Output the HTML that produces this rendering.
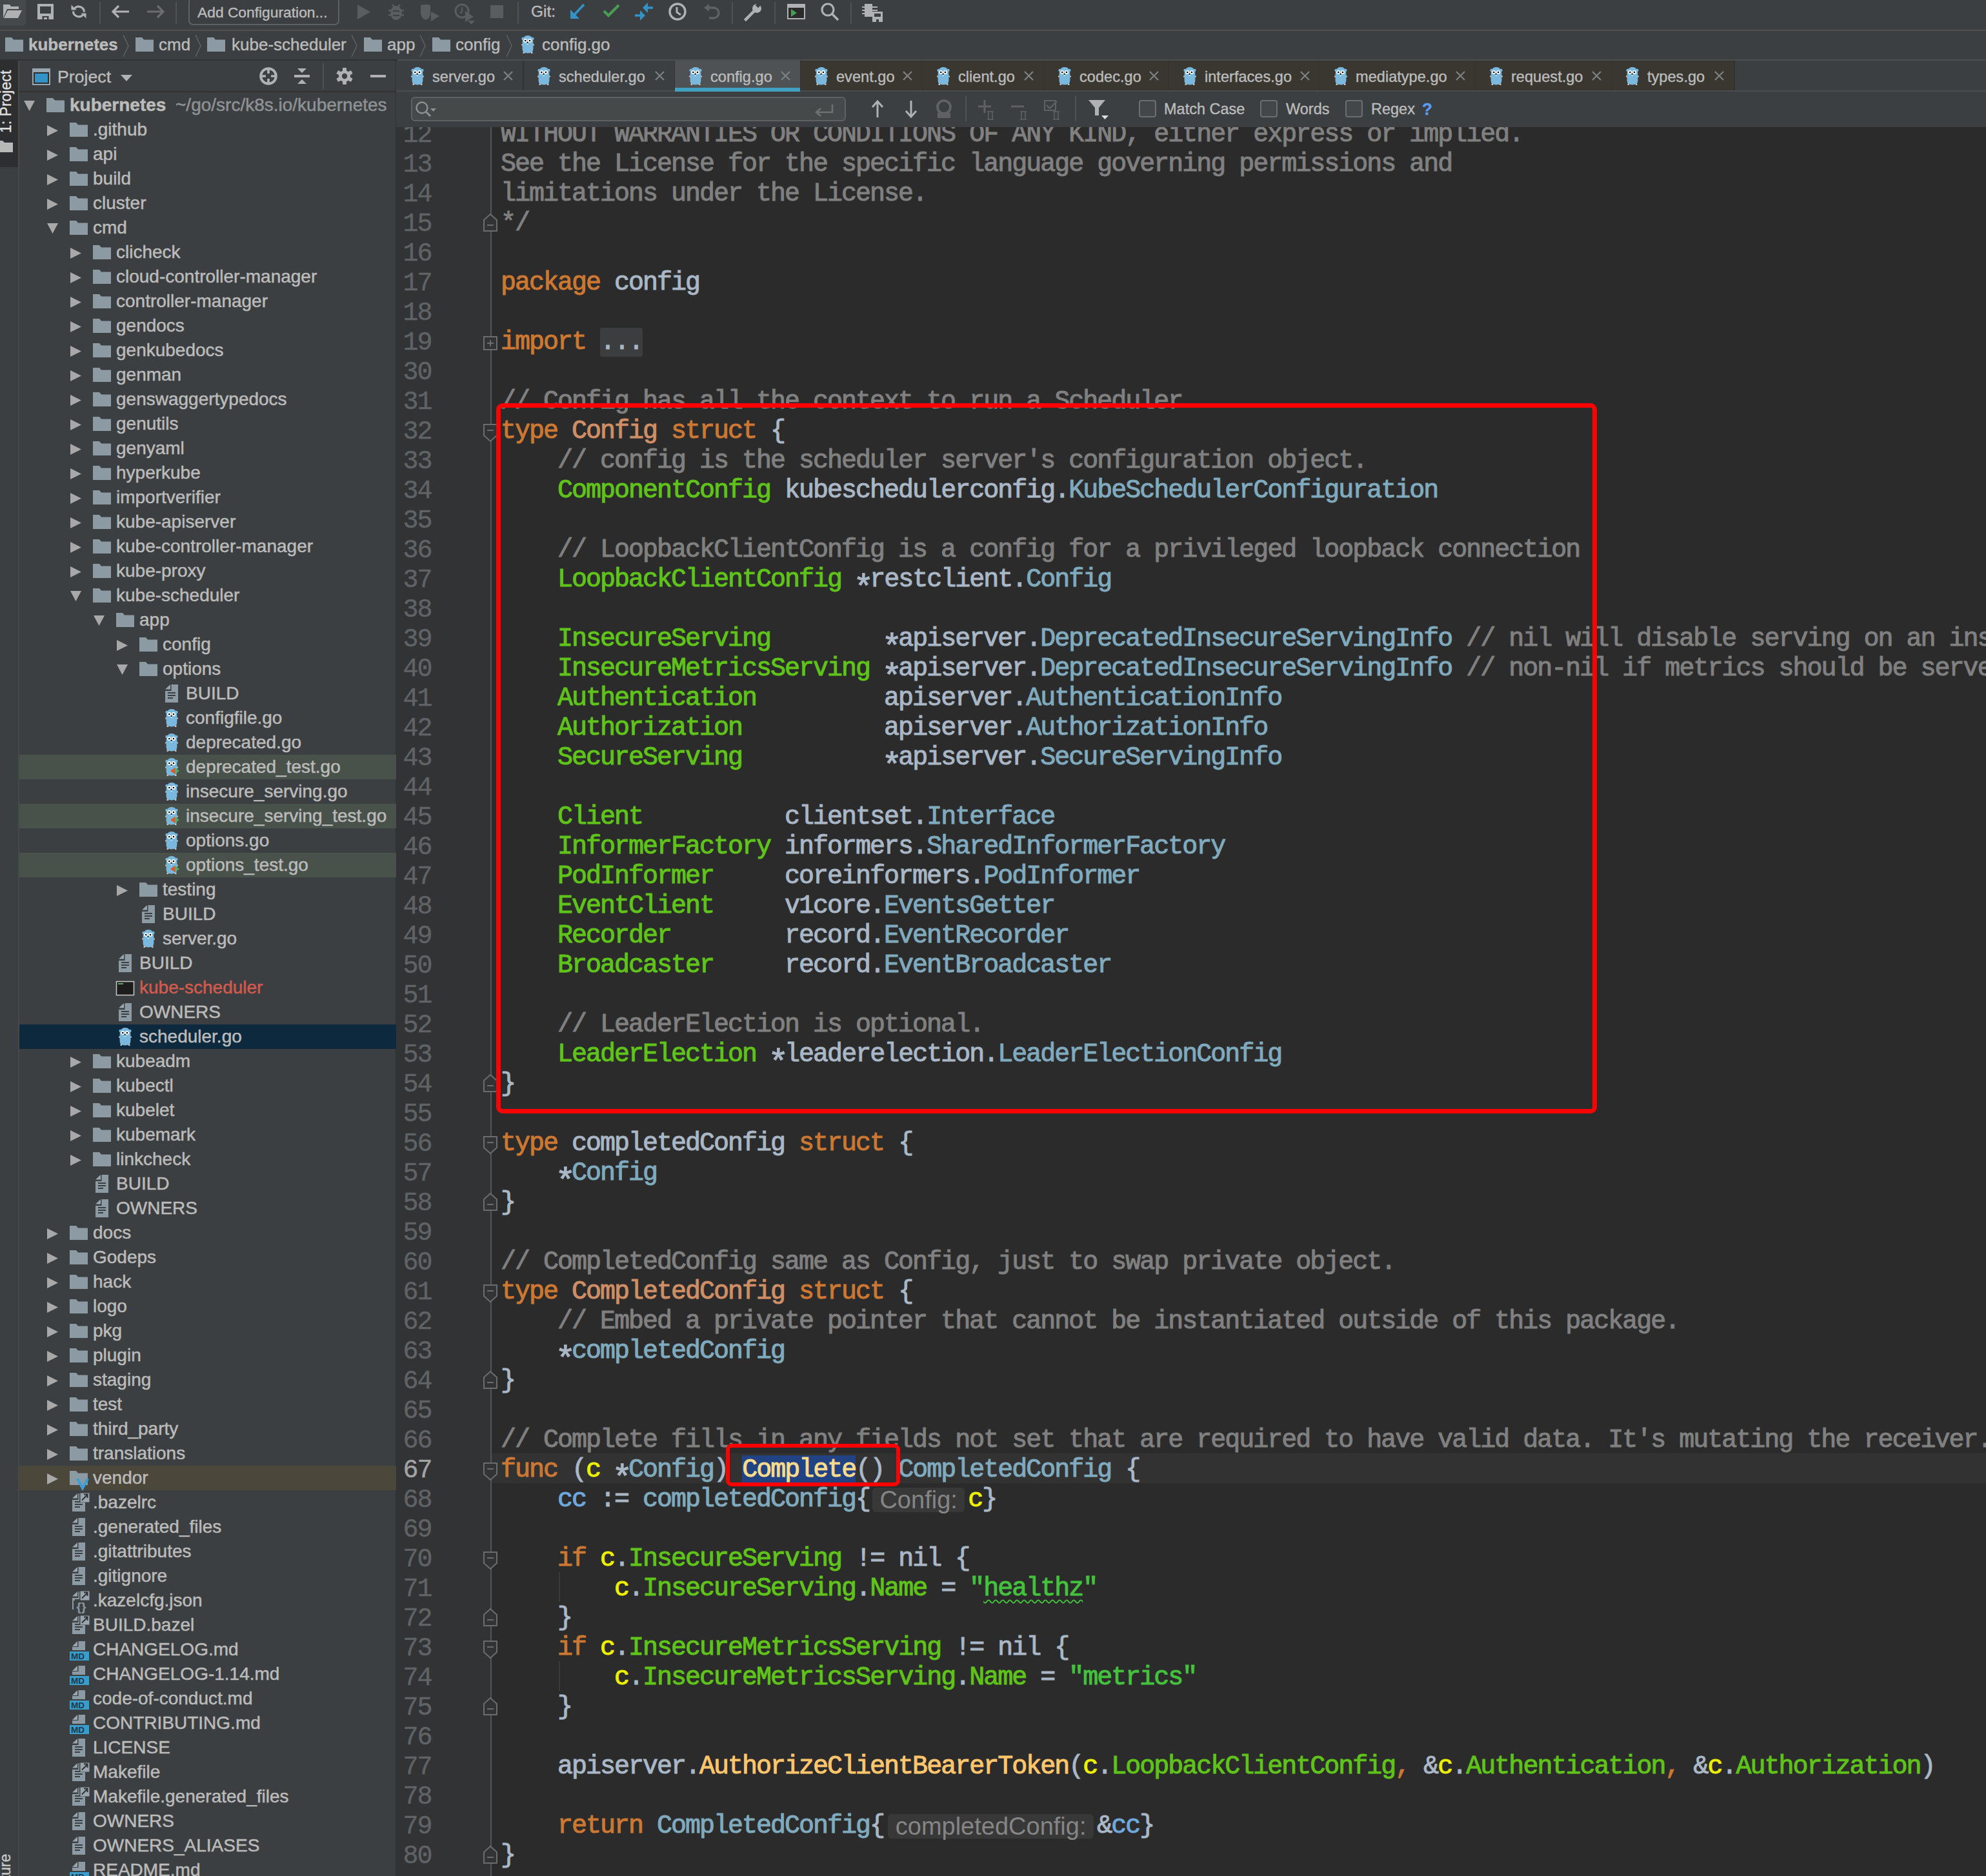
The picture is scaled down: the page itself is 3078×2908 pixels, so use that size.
<!DOCTYPE html>
<html><head><meta charset="utf-8"><title>GoLand</title><style>
*{margin:0;padding:0;box-sizing:border-box}
html,body{width:3078px;height:2908px;overflow:hidden;background:#3c3f41}
body{position:relative;font-family:"Liberation Sans",sans-serif;color:#bbbbbb}
.a{position:absolute}
.ui{position:absolute;-webkit-text-stroke:0.4px currentColor;font-family:"Liberation Sans",sans-serif;white-space:pre;line-height:1}
svg{position:absolute;overflow:visible}
.k{color:#cc7832}.c{color:#808080}.d{color:#a9b7c6}.f{color:#5fc31a}.t{color:#80aabd}
.td{color:#cf8e65}.y{color:#efef00}.fn{color:#ffc66d}.s{color:#44c23e}.v{color:#6fa8dc}
.row{position:absolute;left:776px;-webkit-text-stroke:1.0px currentColor;height:46px;font-family:"Liberation Mono",monospace;white-space:pre;font-size:40px;letter-spacing:-2px;line-height:46px;color:#a9b7c6}
.ln{position:absolute;-webkit-text-stroke:0.4px currentColor;left:598.5px;width:70px;text-align:right;height:46px;font-family:"Liberation Mono",monospace;white-space:pre;font-size:40px;letter-spacing:-2px;line-height:46px;color:#606366}
.tr{position:absolute;-webkit-text-stroke:0.5px currentColor;height:38px;font-size:28px;line-height:38px;white-space:pre;color:#bbbbbb;font-family:"Liberation Sans",sans-serif}
.hint{display:inline-block;background:#383838;color:#858585;font-family:"Liberation Sans",sans-serif;letter-spacing:0;font-size:38px;border-radius:6px;text-align:center;line-height:38px;height:38px;vertical-align:-3px;-webkit-text-stroke:0}
</style></head><body>

<div class="a" style="left:0px;top:0px;width:3078px;height:46px;background:#3c3f41;"></div>
<div class="a" style="left:0px;top:46px;width:3078px;height:2px;background:#505050;"></div>
<div class="a" style="left:0px;top:48px;width:3078px;height:44px;background:#3c3f41;"></div>
<div class="a" style="left:0px;top:92px;width:616px;height:2px;background:#2e3032;"></div>
<div class="a" style="left:616px;top:92px;width:2462px;height:2px;background:#4b4d4f;"></div>
<div class="a" style="left:0px;top:94px;width:28px;height:2814px;background:#3c3f41;"></div>
<div class="a" style="left:0px;top:94px;width:28px;height:165px;background:#2c2e30;"></div>
<div class="a" style="left:28px;top:94px;width:2px;height:2814px;background:#46484a;"></div>
<div class="a" style="left:30px;top:94px;width:584px;height:2814px;background:#3c3f41;"></div>
<div class="a" style="left:30px;top:141px;width:584px;height:2px;background:#323232;"></div>
<div class="a" style="left:613px;top:94px;width:2px;height:2814px;background:#2f3133;"></div>
<div class="a" style="left:614px;top:94px;width:2464px;height:47px;background:#3c3f41;"></div>
<div class="a" style="left:614px;top:140px;width:2464px;height:1px;background:#323232;"></div>
<div class="a" style="left:614px;top:141px;width:2464px;height:55px;background:#3c3f41;"></div>
<div class="a" style="left:614px;top:195px;width:2464px;height:1px;background:#323232;"></div>
<div class="a" style="left:614px;top:196px;width:146px;height:2712px;background:#313335;"></div>
<div class="a" style="left:760px;top:196px;width:2px;height:2712px;background:#555555;"></div>
<div class="a" style="left:762px;top:196px;width:2316px;height:2712px;background:#2b2b2b;"></div>
<div class="ln" style="top:187.35px;color:#606366">12</div>
<div class="row" style="top:186.35px"><span class="c">WITHOUT WARRANTIES OR CONDITIONS OF ANY KIND, either express or implied.</span></div>
<div class="ln" style="top:233.35px;color:#606366">13</div>
<div class="row" style="top:232.35px"><span class="c">See the License for the specific language governing permissions and</span></div>
<div class="ln" style="top:279.35px;color:#606366">14</div>
<div class="row" style="top:278.35px"><span class="c">limitations under the License.</span></div>
<div class="ln" style="top:325.35px;color:#606366">15</div>
<div class="row" style="top:324.35px"><span class="c">*/</span></div>
<svg style="left:749px;top:331px" width="22" height="28" viewBox="0 0 22 28"><path d="M1 27 H21 V10 L11 1 L1 10 Z" fill="#313335" stroke="#6a6d70" stroke-width="2"/><path d="M6 18 H16" stroke="#6a6d70" stroke-width="2"/></svg>
<div class="ln" style="top:371.35px;color:#606366">16</div>
<div class="ln" style="top:417.35px;color:#606366">17</div>
<div class="row" style="top:416.35px"><span class="k">package</span><span class="d"> config</span></div>
<div class="ln" style="top:463.35px;color:#606366">18</div>
<div class="ln" style="top:509.35px;color:#606366">19</div>
<div class="row" style="top:508.35px"><span class="k">import</span><span class="d"> </span><span style="background:#3b3d3e;color:#a9b7c6;border-radius:3px">...</span></div>
<svg style="left:749px;top:521px" width="22" height="22" viewBox="0 0 22 22"><rect x="1" y="1" width="20" height="20" fill="#313335" stroke="#6a6d70" stroke-width="2"/><path d="M6 11 H16 M11 6 V16" stroke="#6a6d70" stroke-width="2"/></svg>
<div class="ln" style="top:555.35px;color:#606366">30</div>
<div class="ln" style="top:601.35px;color:#606366">31</div>
<div class="row" style="top:600.35px"><span class="c">// Config has all the context to run a Scheduler</span></div>
<div class="ln" style="top:647.35px;color:#606366">32</div>
<div class="row" style="top:646.35px"><span class="k">type </span><span class="td">Config</span><span class="k"> struct</span><span class="d"> {</span></div>
<svg style="left:749px;top:657px" width="22" height="28" viewBox="0 0 22 28"><path d="M1 1 H21 V18 L11 27 L1 18 Z" fill="#313335" stroke="#6a6d70" stroke-width="2"/><path d="M6 10 H16" stroke="#6a6d70" stroke-width="2"/></svg>
<div class="ln" style="top:693.35px;color:#606366">33</div>
<div class="row" style="top:692.35px"><span class="d">    </span><span class="c">// config is the scheduler server&#x27;s configuration object.</span></div>
<div class="ln" style="top:739.35px;color:#606366">34</div>
<div class="row" style="top:738.35px"><span class="d">    </span><span class="f">ComponentConfig</span><span class="d"> kubeschedulerconfig.</span><span class="t">KubeSchedulerConfiguration</span></div>
<div class="ln" style="top:785.35px;color:#606366">35</div>
<div class="ln" style="top:831.35px;color:#606366">36</div>
<div class="row" style="top:830.35px"><span class="d">    </span><span class="c">// LoopbackClientConfig is a config for a privileged loopback connection</span></div>
<div class="ln" style="top:877.35px;color:#606366">37</div>
<div class="row" style="top:876.35px"><span class="d">    </span><span class="f">LoopbackClientConfig</span><span class="d"> <span style="display:inline-block;transform:translateY(15px) scale(1.3)">*</span>restclient.</span><span class="t">Config</span></div>
<div class="ln" style="top:923.35px;color:#606366">38</div>
<div class="ln" style="top:969.35px;color:#606366">39</div>
<div class="row" style="top:968.35px"><span class="d">    </span><span class="f">InsecureServing</span><span class="d">        <span style="display:inline-block;transform:translateY(15px) scale(1.3)">*</span>apiserver.</span><span class="t">DeprecatedInsecureServingInfo</span><span class="c"> // nil will disable serving on an insecure port</span></div>
<div class="ln" style="top:1015.35px;color:#606366">40</div>
<div class="row" style="top:1014.35px"><span class="d">    </span><span class="f">InsecureMetricsServing</span><span class="d"> <span style="display:inline-block;transform:translateY(15px) scale(1.3)">*</span>apiserver.</span><span class="t">DeprecatedInsecureServingInfo</span><span class="c"> // non-nil if metrics should be served independently</span></div>
<div class="ln" style="top:1061.35px;color:#606366">41</div>
<div class="row" style="top:1060.35px"><span class="d">    </span><span class="f">Authentication</span><span class="d">         apiserver.</span><span class="t">AuthenticationInfo</span></div>
<div class="ln" style="top:1107.35px;color:#606366">42</div>
<div class="row" style="top:1106.35px"><span class="d">    </span><span class="f">Authorization</span><span class="d">          apiserver.</span><span class="t">AuthorizationInfo</span></div>
<div class="ln" style="top:1153.35px;color:#606366">43</div>
<div class="row" style="top:1152.35px"><span class="d">    </span><span class="f">SecureServing</span><span class="d">          <span style="display:inline-block;transform:translateY(15px) scale(1.3)">*</span>apiserver.</span><span class="t">SecureServingInfo</span></div>
<div class="ln" style="top:1199.35px;color:#606366">44</div>
<div class="ln" style="top:1245.35px;color:#606366">45</div>
<div class="row" style="top:1244.35px"><span class="d">    </span><span class="f">Client</span><span class="d">          clientset.</span><span class="t">Interface</span></div>
<div class="ln" style="top:1291.35px;color:#606366">46</div>
<div class="row" style="top:1290.35px"><span class="d">    </span><span class="f">InformerFactory</span><span class="d"> informers.</span><span class="t">SharedInformerFactory</span></div>
<div class="ln" style="top:1337.35px;color:#606366">47</div>
<div class="row" style="top:1336.35px"><span class="d">    </span><span class="f">PodInformer</span><span class="d">     coreinformers.</span><span class="t">PodInformer</span></div>
<div class="ln" style="top:1383.35px;color:#606366">48</div>
<div class="row" style="top:1382.35px"><span class="d">    </span><span class="f">EventClient</span><span class="d">     v1core.</span><span class="t">EventsGetter</span></div>
<div class="ln" style="top:1429.35px;color:#606366">49</div>
<div class="row" style="top:1428.35px"><span class="d">    </span><span class="f">Recorder</span><span class="d">        record.</span><span class="t">EventRecorder</span></div>
<div class="ln" style="top:1475.35px;color:#606366">50</div>
<div class="row" style="top:1474.35px"><span class="d">    </span><span class="f">Broadcaster</span><span class="d">     record.</span><span class="t">EventBroadcaster</span></div>
<div class="ln" style="top:1521.35px;color:#606366">51</div>
<div class="ln" style="top:1567.35px;color:#606366">52</div>
<div class="row" style="top:1566.35px"><span class="d">    </span><span class="c">// LeaderElection is optional.</span></div>
<div class="ln" style="top:1613.35px;color:#606366">53</div>
<div class="row" style="top:1612.35px"><span class="d">    </span><span class="f">LeaderElection</span><span class="d"> <span style="display:inline-block;transform:translateY(15px) scale(1.3)">*</span>leaderelection.</span><span class="t">LeaderElectionConfig</span></div>
<div class="ln" style="top:1659.35px;color:#606366">54</div>
<div class="row" style="top:1658.35px"><span class="d">}</span></div>
<svg style="left:749px;top:1665px" width="22" height="28" viewBox="0 0 22 28"><path d="M1 27 H21 V10 L11 1 L1 10 Z" fill="#313335" stroke="#6a6d70" stroke-width="2"/><path d="M6 18 H16" stroke="#6a6d70" stroke-width="2"/></svg>
<div class="ln" style="top:1705.35px;color:#606366">55</div>
<div class="ln" style="top:1751.35px;color:#606366">56</div>
<div class="row" style="top:1750.35px"><span class="k">type </span><span class="d">completedConfig</span><span class="k"> struct</span><span class="d"> {</span></div>
<svg style="left:749px;top:1761px" width="22" height="28" viewBox="0 0 22 28"><path d="M1 1 H21 V18 L11 27 L1 18 Z" fill="#313335" stroke="#6a6d70" stroke-width="2"/><path d="M6 10 H16" stroke="#6a6d70" stroke-width="2"/></svg>
<div class="ln" style="top:1797.35px;color:#606366">57</div>
<div class="row" style="top:1796.35px"><span class="d">    <span style="display:inline-block;transform:translateY(15px) scale(1.3)">*</span></span><span class="t">Config</span></div>
<div class="ln" style="top:1843.35px;color:#606366">58</div>
<div class="row" style="top:1842.35px"><span class="d">}</span></div>
<svg style="left:749px;top:1849px" width="22" height="28" viewBox="0 0 22 28"><path d="M1 27 H21 V10 L11 1 L1 10 Z" fill="#313335" stroke="#6a6d70" stroke-width="2"/><path d="M6 18 H16" stroke="#6a6d70" stroke-width="2"/></svg>
<div class="ln" style="top:1889.35px;color:#606366">59</div>
<div class="ln" style="top:1935.35px;color:#606366">60</div>
<div class="row" style="top:1934.35px"><span class="c">// CompletedConfig same as Config, just to swap private object.</span></div>
<div class="ln" style="top:1981.35px;color:#606366">61</div>
<div class="row" style="top:1980.35px"><span class="k">type </span><span class="td">CompletedConfig</span><span class="k"> struct</span><span class="d"> {</span></div>
<svg style="left:749px;top:1991px" width="22" height="28" viewBox="0 0 22 28"><path d="M1 1 H21 V18 L11 27 L1 18 Z" fill="#313335" stroke="#6a6d70" stroke-width="2"/><path d="M6 10 H16" stroke="#6a6d70" stroke-width="2"/></svg>
<div class="ln" style="top:2027.35px;color:#606366">62</div>
<div class="row" style="top:2026.35px"><span class="d">    </span><span class="c">// Embed a private pointer that cannot be instantiated outside of this package.</span></div>
<div class="ln" style="top:2073.35px;color:#606366">63</div>
<div class="row" style="top:2072.35px"><span class="d">    <span style="display:inline-block;transform:translateY(15px) scale(1.3)">*</span></span><span class="t">completedConfig</span></div>
<div class="ln" style="top:2119.35px;color:#606366">64</div>
<div class="row" style="top:2118.35px"><span class="d">}</span></div>
<svg style="left:749px;top:2125px" width="22" height="28" viewBox="0 0 22 28"><path d="M1 27 H21 V10 L11 1 L1 10 Z" fill="#313335" stroke="#6a6d70" stroke-width="2"/><path d="M6 18 H16" stroke="#6a6d70" stroke-width="2"/></svg>
<div class="ln" style="top:2165.35px;color:#606366">65</div>
<div class="ln" style="top:2211.35px;color:#606366">66</div>
<div class="row" style="top:2210.35px"><span class="c">// Complete fills in any fields not set that are required to have valid data. It&#x27;s mutating the receiver.</span></div>
<div class="a" style="left:762px;top:2253px;width:2316px;height:46px;background:#323232;"></div>
<div class="ln" style="top:2257.35px;color:#a4a3a3">67</div>
<div class="row" style="top:2256.35px"><span class="k">func</span><span class="d"> (</span><span class="y">c</span><span class="d"> <span style="display:inline-block;transform:translateY(15px) scale(1.3)">*</span></span><span class="t">Config</span><span class="d">) </span><span style="background:#214283;color:#f9dc8c">Complete</span><span class="d">() </span><span class="t">CompletedConfig</span><span class="d"> {</span></div>
<svg style="left:749px;top:2267px" width="22" height="28" viewBox="0 0 22 28"><path d="M1 1 H21 V18 L11 27 L1 18 Z" fill="#313335" stroke="#6a6d70" stroke-width="2"/><path d="M6 10 H16" stroke="#6a6d70" stroke-width="2"/></svg>
<div class="ln" style="top:2303.35px;color:#606366">68</div>
<div class="row" style="top:2302.35px"><span class="d">    </span><span class="v">cc</span><span class="d"> := </span><span class="t">completedConfig</span><span class="d">{</span><span class="hint" style="width:143px;margin:0 5px 0 4px">Config:</span><span class="y">c</span><span class="d">}</span></div>
<div class="ln" style="top:2349.35px;color:#606366">69</div>
<div class="ln" style="top:2395.35px;color:#606366">70</div>
<div class="row" style="top:2394.35px"><span class="d">    </span><span class="k">if </span><span class="y">c</span><span class="d">.</span><span class="f">InsecureServing</span><span class="d"> != nil {</span></div>
<svg style="left:749px;top:2405px" width="22" height="28" viewBox="0 0 22 28"><path d="M1 1 H21 V18 L11 27 L1 18 Z" fill="#313335" stroke="#6a6d70" stroke-width="2"/><path d="M6 10 H16" stroke="#6a6d70" stroke-width="2"/></svg>
<div class="ln" style="top:2441.35px;color:#606366">71</div>
<div class="row" style="top:2440.35px"><span class="d">        </span><span class="y">c</span><span class="d">.</span><span class="f">InsecureServing</span><span class="d">.</span><span class="f">Name</span><span class="d"> = </span><span class="s">&quot;</span><span class="s" style="text-decoration:underline wavy #44c23e;text-decoration-thickness:2px;text-underline-offset:6px">healthz</span><span class="s">&quot;</span></div>
<div class="ln" style="top:2487.35px;color:#606366">72</div>
<div class="row" style="top:2486.35px"><span class="d">    }</span></div>
<svg style="left:749px;top:2493px" width="22" height="28" viewBox="0 0 22 28"><path d="M1 27 H21 V10 L11 1 L1 10 Z" fill="#313335" stroke="#6a6d70" stroke-width="2"/><path d="M6 18 H16" stroke="#6a6d70" stroke-width="2"/></svg>
<div class="ln" style="top:2533.35px;color:#606366">73</div>
<div class="row" style="top:2532.35px"><span class="d">    </span><span class="k">if </span><span class="y">c</span><span class="d">.</span><span class="f">InsecureMetricsServing</span><span class="d"> != nil {</span></div>
<svg style="left:749px;top:2543px" width="22" height="28" viewBox="0 0 22 28"><path d="M1 1 H21 V18 L11 27 L1 18 Z" fill="#313335" stroke="#6a6d70" stroke-width="2"/><path d="M6 10 H16" stroke="#6a6d70" stroke-width="2"/></svg>
<div class="ln" style="top:2579.35px;color:#606366">74</div>
<div class="row" style="top:2578.35px"><span class="d">        </span><span class="y">c</span><span class="d">.</span><span class="f">InsecureMetricsServing</span><span class="d">.</span><span class="f">Name</span><span class="d"> = </span><span class="s">&quot;metrics&quot;</span></div>
<div class="ln" style="top:2625.35px;color:#606366">75</div>
<div class="row" style="top:2624.35px"><span class="d">    }</span></div>
<svg style="left:749px;top:2631px" width="22" height="28" viewBox="0 0 22 28"><path d="M1 27 H21 V10 L11 1 L1 10 Z" fill="#313335" stroke="#6a6d70" stroke-width="2"/><path d="M6 18 H16" stroke="#6a6d70" stroke-width="2"/></svg>
<div class="ln" style="top:2671.35px;color:#606366">76</div>
<div class="ln" style="top:2717.35px;color:#606366">77</div>
<div class="row" style="top:2716.35px"><span class="d">    apiserver.</span><span class="fn">AuthorizeClientBearerToken</span><span class="d">(</span><span class="y">c</span><span class="d">.</span><span class="f">LoopbackClientConfig</span><span class="k">,</span><span class="d"> &amp;</span><span class="y">c</span><span class="d">.</span><span class="f">Authentication</span><span class="k">,</span><span class="d"> &amp;</span><span class="y">c</span><span class="d">.</span><span class="f">Authorization</span><span class="d">)</span></div>
<div class="ln" style="top:2763.35px;color:#606366">78</div>
<div class="ln" style="top:2809.35px;color:#606366">79</div>
<div class="row" style="top:2808.35px"><span class="d">    </span><span class="k">return </span><span class="t">CompletedConfig</span><span class="d">{</span><span class="hint" style="width:319px;margin:0 5px 0 6px">completedConfig:</span><span class="d">&amp;</span><span class="v">cc</span><span class="d">}</span></div>
<div class="ln" style="top:2855.35px;color:#606366">80</div>
<div class="row" style="top:2854.35px"><span class="d">}</span></div>
<svg style="left:749px;top:2861px" width="22" height="28" viewBox="0 0 22 28"><path d="M1 27 H21 V10 L11 1 L1 10 Z" fill="#313335" stroke="#6a6d70" stroke-width="2"/><path d="M6 18 H16" stroke="#6a6d70" stroke-width="2"/></svg>
<div class="a" style="left:866.0px;top:2437px;width:2px;height:46px;background:#393939;"></div>
<div class="a" style="left:866.0px;top:2575px;width:2px;height:46px;background:#393939;"></div>
<div class="a" style="left:769px;top:625px;width:1706px;height:1101px;border:7px solid #fe0000;border-radius:10px"></div>
<div class="a" style="left:1125px;top:2238px;width:270px;height:66px;border:6.5px solid #fe0000;border-radius:9px"></div>
<div class="a" style="left:614px;top:94px;width:2464px;height:103px;background:#3c3f41;"></div>
<div class="a" style="left:614px;top:140px;width:2464px;height:2px;background:#4a4c4e;"></div>
<div class="a" style="left:810px;top:94px;width:2px;height:46px;background:#323232;"></div>
<svg style="left:637px;top:104px;" width="20" height="28" viewBox="0 0 20 28"><circle cx="2.6" cy="5" r="2.2" fill="#7ab8dd"/>
 <circle cx="17.4" cy="5" r="2.2" fill="#7ab8dd"/>
 <path d="M1.6 12 Q1.6 0 10 0 Q18.4 0 18.4 12 L18.4 21 Q18.4 27.5 10 27.5 Q1.6 27.5 1.6 21 Z" fill="#7ab8dd"/>
 <circle cx="6.3" cy="8" r="3" fill="#fff"/><circle cx="13" cy="8" r="3" fill="#fff"/>
 <circle cx="6.3" cy="8" r="1.3" fill="#000"/><circle cx="13" cy="8" r="1.3" fill="#000"/>
 <circle cx="9.6" cy="10.8" r="1.1" fill="#111"/>
 <rect x="8.6" y="12.6" width="2.2" height="1.4" fill="#eef"/>
 <rect x="0" y="13.5" width="2" height="2" fill="#c9c2ba"/><rect x="18" y="13.5" width="2" height="2" fill="#c9c2ba"/>
 <rect x="2.5" y="25.5" width="2.5" height="2.5" fill="#c9c2ba"/><rect x="15" y="25.5" width="2.5" height="2.5" fill="#c9c2ba"/></svg>
<div class="ui" style="left:670px;top:108.02px;font-size:23.6px;color:#bbbbbb;">server.go</div>
<div class="a" style="left:1045px;top:94px;width:2px;height:46px;background:#323232;"></div>
<svg style="left:833px;top:104px;" width="20" height="28" viewBox="0 0 20 28"><circle cx="2.6" cy="5" r="2.2" fill="#7ab8dd"/>
 <circle cx="17.4" cy="5" r="2.2" fill="#7ab8dd"/>
 <path d="M1.6 12 Q1.6 0 10 0 Q18.4 0 18.4 12 L18.4 21 Q18.4 27.5 10 27.5 Q1.6 27.5 1.6 21 Z" fill="#7ab8dd"/>
 <circle cx="6.3" cy="8" r="3" fill="#fff"/><circle cx="13" cy="8" r="3" fill="#fff"/>
 <circle cx="6.3" cy="8" r="1.3" fill="#000"/><circle cx="13" cy="8" r="1.3" fill="#000"/>
 <circle cx="9.6" cy="10.8" r="1.1" fill="#111"/>
 <rect x="8.6" y="12.6" width="2.2" height="1.4" fill="#eef"/>
 <rect x="0" y="13.5" width="2" height="2" fill="#c9c2ba"/><rect x="18" y="13.5" width="2" height="2" fill="#c9c2ba"/>
 <rect x="2.5" y="25.5" width="2.5" height="2.5" fill="#c9c2ba"/><rect x="15" y="25.5" width="2.5" height="2.5" fill="#c9c2ba"/></svg>
<div class="ui" style="left:866px;top:108.02px;font-size:23.6px;color:#bbbbbb;">scheduler.go</div>
<div class="a" style="left:1046px;top:94px;width:194px;height:46px;background:#4e5254;"></div>
<div class="a" style="left:1046px;top:136px;width:194px;height:6px;background:#42a0c2;"></div>
<div class="a" style="left:1240px;top:94px;width:2px;height:46px;background:#323232;"></div>
<svg style="left:1068px;top:104px;" width="20" height="28" viewBox="0 0 20 28"><circle cx="2.6" cy="5" r="2.2" fill="#7ab8dd"/>
 <circle cx="17.4" cy="5" r="2.2" fill="#7ab8dd"/>
 <path d="M1.6 12 Q1.6 0 10 0 Q18.4 0 18.4 12 L18.4 21 Q18.4 27.5 10 27.5 Q1.6 27.5 1.6 21 Z" fill="#7ab8dd"/>
 <circle cx="6.3" cy="8" r="3" fill="#fff"/><circle cx="13" cy="8" r="3" fill="#fff"/>
 <circle cx="6.3" cy="8" r="1.3" fill="#000"/><circle cx="13" cy="8" r="1.3" fill="#000"/>
 <circle cx="9.6" cy="10.8" r="1.1" fill="#111"/>
 <rect x="8.6" y="12.6" width="2.2" height="1.4" fill="#eef"/>
 <rect x="0" y="13.5" width="2" height="2" fill="#c9c2ba"/><rect x="18" y="13.5" width="2" height="2" fill="#c9c2ba"/>
 <rect x="2.5" y="25.5" width="2.5" height="2.5" fill="#c9c2ba"/><rect x="15" y="25.5" width="2.5" height="2.5" fill="#c9c2ba"/></svg>
<div class="ui" style="left:1101px;top:108.02px;font-size:23.6px;color:#bbbbbb;">config.go</div>
<div class="a" style="left:1241px;top:94px;width:188px;height:46px;background:#393730;"></div>
<div class="a" style="left:1429px;top:94px;width:2px;height:46px;background:#323232;"></div>
<svg style="left:1263px;top:104px;" width="20" height="28" viewBox="0 0 20 28"><circle cx="2.6" cy="5" r="2.2" fill="#7ab8dd"/>
 <circle cx="17.4" cy="5" r="2.2" fill="#7ab8dd"/>
 <path d="M1.6 12 Q1.6 0 10 0 Q18.4 0 18.4 12 L18.4 21 Q18.4 27.5 10 27.5 Q1.6 27.5 1.6 21 Z" fill="#7ab8dd"/>
 <circle cx="6.3" cy="8" r="3" fill="#fff"/><circle cx="13" cy="8" r="3" fill="#fff"/>
 <circle cx="6.3" cy="8" r="1.3" fill="#000"/><circle cx="13" cy="8" r="1.3" fill="#000"/>
 <circle cx="9.6" cy="10.8" r="1.1" fill="#111"/>
 <rect x="8.6" y="12.6" width="2.2" height="1.4" fill="#eef"/>
 <rect x="0" y="13.5" width="2" height="2" fill="#c9c2ba"/><rect x="18" y="13.5" width="2" height="2" fill="#c9c2ba"/>
 <rect x="2.5" y="25.5" width="2.5" height="2.5" fill="#c9c2ba"/><rect x="15" y="25.5" width="2.5" height="2.5" fill="#c9c2ba"/></svg>
<div class="ui" style="left:1296px;top:108.02px;font-size:23.6px;color:#bbbbbb;">event.go</div>
<div class="a" style="left:1430px;top:94px;width:187px;height:46px;background:#393730;"></div>
<div class="a" style="left:1617px;top:94px;width:2px;height:46px;background:#323232;"></div>
<svg style="left:1452px;top:104px;" width="20" height="28" viewBox="0 0 20 28"><circle cx="2.6" cy="5" r="2.2" fill="#7ab8dd"/>
 <circle cx="17.4" cy="5" r="2.2" fill="#7ab8dd"/>
 <path d="M1.6 12 Q1.6 0 10 0 Q18.4 0 18.4 12 L18.4 21 Q18.4 27.5 10 27.5 Q1.6 27.5 1.6 21 Z" fill="#7ab8dd"/>
 <circle cx="6.3" cy="8" r="3" fill="#fff"/><circle cx="13" cy="8" r="3" fill="#fff"/>
 <circle cx="6.3" cy="8" r="1.3" fill="#000"/><circle cx="13" cy="8" r="1.3" fill="#000"/>
 <circle cx="9.6" cy="10.8" r="1.1" fill="#111"/>
 <rect x="8.6" y="12.6" width="2.2" height="1.4" fill="#eef"/>
 <rect x="0" y="13.5" width="2" height="2" fill="#c9c2ba"/><rect x="18" y="13.5" width="2" height="2" fill="#c9c2ba"/>
 <rect x="2.5" y="25.5" width="2.5" height="2.5" fill="#c9c2ba"/><rect x="15" y="25.5" width="2.5" height="2.5" fill="#c9c2ba"/></svg>
<div class="ui" style="left:1485px;top:108.02px;font-size:23.6px;color:#bbbbbb;">client.go</div>
<div class="a" style="left:1618px;top:94px;width:193px;height:46px;background:#393730;"></div>
<div class="a" style="left:1811px;top:94px;width:2px;height:46px;background:#323232;"></div>
<svg style="left:1640px;top:104px;" width="20" height="28" viewBox="0 0 20 28"><circle cx="2.6" cy="5" r="2.2" fill="#7ab8dd"/>
 <circle cx="17.4" cy="5" r="2.2" fill="#7ab8dd"/>
 <path d="M1.6 12 Q1.6 0 10 0 Q18.4 0 18.4 12 L18.4 21 Q18.4 27.5 10 27.5 Q1.6 27.5 1.6 21 Z" fill="#7ab8dd"/>
 <circle cx="6.3" cy="8" r="3" fill="#fff"/><circle cx="13" cy="8" r="3" fill="#fff"/>
 <circle cx="6.3" cy="8" r="1.3" fill="#000"/><circle cx="13" cy="8" r="1.3" fill="#000"/>
 <circle cx="9.6" cy="10.8" r="1.1" fill="#111"/>
 <rect x="8.6" y="12.6" width="2.2" height="1.4" fill="#eef"/>
 <rect x="0" y="13.5" width="2" height="2" fill="#c9c2ba"/><rect x="18" y="13.5" width="2" height="2" fill="#c9c2ba"/>
 <rect x="2.5" y="25.5" width="2.5" height="2.5" fill="#c9c2ba"/><rect x="15" y="25.5" width="2.5" height="2.5" fill="#c9c2ba"/></svg>
<div class="ui" style="left:1673px;top:108.02px;font-size:23.6px;color:#bbbbbb;">codec.go</div>
<div class="a" style="left:1812px;top:94px;width:233px;height:46px;background:#393730;"></div>
<div class="a" style="left:2045px;top:94px;width:2px;height:46px;background:#323232;"></div>
<svg style="left:1834px;top:104px;" width="20" height="28" viewBox="0 0 20 28"><circle cx="2.6" cy="5" r="2.2" fill="#7ab8dd"/>
 <circle cx="17.4" cy="5" r="2.2" fill="#7ab8dd"/>
 <path d="M1.6 12 Q1.6 0 10 0 Q18.4 0 18.4 12 L18.4 21 Q18.4 27.5 10 27.5 Q1.6 27.5 1.6 21 Z" fill="#7ab8dd"/>
 <circle cx="6.3" cy="8" r="3" fill="#fff"/><circle cx="13" cy="8" r="3" fill="#fff"/>
 <circle cx="6.3" cy="8" r="1.3" fill="#000"/><circle cx="13" cy="8" r="1.3" fill="#000"/>
 <circle cx="9.6" cy="10.8" r="1.1" fill="#111"/>
 <rect x="8.6" y="12.6" width="2.2" height="1.4" fill="#eef"/>
 <rect x="0" y="13.5" width="2" height="2" fill="#c9c2ba"/><rect x="18" y="13.5" width="2" height="2" fill="#c9c2ba"/>
 <rect x="2.5" y="25.5" width="2.5" height="2.5" fill="#c9c2ba"/><rect x="15" y="25.5" width="2.5" height="2.5" fill="#c9c2ba"/></svg>
<div class="ui" style="left:1867px;top:108.02px;font-size:23.6px;color:#bbbbbb;">interfaces.go</div>
<div class="a" style="left:2046px;top:94px;width:240px;height:46px;background:#393730;"></div>
<div class="a" style="left:2286px;top:94px;width:2px;height:46px;background:#323232;"></div>
<svg style="left:2068px;top:104px;" width="20" height="28" viewBox="0 0 20 28"><circle cx="2.6" cy="5" r="2.2" fill="#7ab8dd"/>
 <circle cx="17.4" cy="5" r="2.2" fill="#7ab8dd"/>
 <path d="M1.6 12 Q1.6 0 10 0 Q18.4 0 18.4 12 L18.4 21 Q18.4 27.5 10 27.5 Q1.6 27.5 1.6 21 Z" fill="#7ab8dd"/>
 <circle cx="6.3" cy="8" r="3" fill="#fff"/><circle cx="13" cy="8" r="3" fill="#fff"/>
 <circle cx="6.3" cy="8" r="1.3" fill="#000"/><circle cx="13" cy="8" r="1.3" fill="#000"/>
 <circle cx="9.6" cy="10.8" r="1.1" fill="#111"/>
 <rect x="8.6" y="12.6" width="2.2" height="1.4" fill="#eef"/>
 <rect x="0" y="13.5" width="2" height="2" fill="#c9c2ba"/><rect x="18" y="13.5" width="2" height="2" fill="#c9c2ba"/>
 <rect x="2.5" y="25.5" width="2.5" height="2.5" fill="#c9c2ba"/><rect x="15" y="25.5" width="2.5" height="2.5" fill="#c9c2ba"/></svg>
<div class="ui" style="left:2101px;top:108.02px;font-size:23.6px;color:#bbbbbb;">mediatype.go</div>
<div class="a" style="left:2287px;top:94px;width:210px;height:46px;background:#393730;"></div>
<div class="a" style="left:2497px;top:94px;width:2px;height:46px;background:#323232;"></div>
<svg style="left:2309px;top:104px;" width="20" height="28" viewBox="0 0 20 28"><circle cx="2.6" cy="5" r="2.2" fill="#7ab8dd"/>
 <circle cx="17.4" cy="5" r="2.2" fill="#7ab8dd"/>
 <path d="M1.6 12 Q1.6 0 10 0 Q18.4 0 18.4 12 L18.4 21 Q18.4 27.5 10 27.5 Q1.6 27.5 1.6 21 Z" fill="#7ab8dd"/>
 <circle cx="6.3" cy="8" r="3" fill="#fff"/><circle cx="13" cy="8" r="3" fill="#fff"/>
 <circle cx="6.3" cy="8" r="1.3" fill="#000"/><circle cx="13" cy="8" r="1.3" fill="#000"/>
 <circle cx="9.6" cy="10.8" r="1.1" fill="#111"/>
 <rect x="8.6" y="12.6" width="2.2" height="1.4" fill="#eef"/>
 <rect x="0" y="13.5" width="2" height="2" fill="#c9c2ba"/><rect x="18" y="13.5" width="2" height="2" fill="#c9c2ba"/>
 <rect x="2.5" y="25.5" width="2.5" height="2.5" fill="#c9c2ba"/><rect x="15" y="25.5" width="2.5" height="2.5" fill="#c9c2ba"/></svg>
<div class="ui" style="left:2342px;top:108.02px;font-size:23.6px;color:#bbbbbb;">request.go</div>
<div class="a" style="left:2498px;top:94px;width:189px;height:46px;background:#393730;"></div>
<div class="a" style="left:2687px;top:94px;width:2px;height:46px;background:#323232;"></div>
<svg style="left:2520px;top:104px;" width="20" height="28" viewBox="0 0 20 28"><circle cx="2.6" cy="5" r="2.2" fill="#7ab8dd"/>
 <circle cx="17.4" cy="5" r="2.2" fill="#7ab8dd"/>
 <path d="M1.6 12 Q1.6 0 10 0 Q18.4 0 18.4 12 L18.4 21 Q18.4 27.5 10 27.5 Q1.6 27.5 1.6 21 Z" fill="#7ab8dd"/>
 <circle cx="6.3" cy="8" r="3" fill="#fff"/><circle cx="13" cy="8" r="3" fill="#fff"/>
 <circle cx="6.3" cy="8" r="1.3" fill="#000"/><circle cx="13" cy="8" r="1.3" fill="#000"/>
 <circle cx="9.6" cy="10.8" r="1.1" fill="#111"/>
 <rect x="8.6" y="12.6" width="2.2" height="1.4" fill="#eef"/>
 <rect x="0" y="13.5" width="2" height="2" fill="#c9c2ba"/><rect x="18" y="13.5" width="2" height="2" fill="#c9c2ba"/>
 <rect x="2.5" y="25.5" width="2.5" height="2.5" fill="#c9c2ba"/><rect x="15" y="25.5" width="2.5" height="2.5" fill="#c9c2ba"/></svg>
<div class="ui" style="left:2553px;top:108.02px;font-size:23.6px;color:#bbbbbb;">types.go</div>
<svg style="left:780px;top:110px" width="15" height="15" viewBox="0 0 15 15"><path d="M1 1 L14 14 M14 1 L1 14" stroke="#7e8083" stroke-width="2.2"/></svg>
<svg style="left:1015px;top:110px" width="15" height="15" viewBox="0 0 15 15"><path d="M1 1 L14 14 M14 1 L1 14" stroke="#7e8083" stroke-width="2.2"/></svg>
<svg style="left:1210px;top:110px" width="15" height="15" viewBox="0 0 15 15"><path d="M1 1 L14 14 M14 1 L1 14" stroke="#7e8083" stroke-width="2.2"/></svg>
<svg style="left:1399px;top:110px" width="15" height="15" viewBox="0 0 15 15"><path d="M1 1 L14 14 M14 1 L1 14" stroke="#7e8083" stroke-width="2.2"/></svg>
<svg style="left:1587px;top:110px" width="15" height="15" viewBox="0 0 15 15"><path d="M1 1 L14 14 M14 1 L1 14" stroke="#7e8083" stroke-width="2.2"/></svg>
<svg style="left:1781px;top:110px" width="15" height="15" viewBox="0 0 15 15"><path d="M1 1 L14 14 M14 1 L1 14" stroke="#7e8083" stroke-width="2.2"/></svg>
<svg style="left:2015px;top:110px" width="15" height="15" viewBox="0 0 15 15"><path d="M1 1 L14 14 M14 1 L1 14" stroke="#7e8083" stroke-width="2.2"/></svg>
<svg style="left:2256px;top:110px" width="15" height="15" viewBox="0 0 15 15"><path d="M1 1 L14 14 M14 1 L1 14" stroke="#7e8083" stroke-width="2.2"/></svg>
<svg style="left:2467px;top:110px" width="15" height="15" viewBox="0 0 15 15"><path d="M1 1 L14 14 M14 1 L1 14" stroke="#7e8083" stroke-width="2.2"/></svg>
<svg style="left:2657px;top:110px" width="15" height="15" viewBox="0 0 15 15"><path d="M1 1 L14 14 M14 1 L1 14" stroke="#7e8083" stroke-width="2.2"/></svg>
<div class="a" style="left:637px;top:150px;width:674px;height:38px;background:#45494a;border:2px solid #5e6163;border-radius:6px"></div>
<svg style="left:644px;top:157px" width="33" height="26" viewBox="0 0 33 26"><circle cx="10" cy="10" r="8.5" stroke="#8d9194" stroke-width="2.4" fill="none"/><path d="M16 16 L23 23" stroke="#8d9194" stroke-width="3"/><path d="M23 11 H32 L27.5 16 Z" fill="#8d9194"/></svg>
<svg style="left:1262px;top:162px" width="30" height="20" viewBox="0 0 30 20"><path d="M28 0 V12 H4 M10 6 L3 12 L10 18" stroke="#6e7072" stroke-width="2.6" fill="none"/></svg>
<svg style="left:1350px;top:155px" width="20" height="28" viewBox="0 0 20 28"><path d="M10 27 V3 M2 11 L10 2 L18 11" stroke="#afb1b3" stroke-width="3" fill="none"/></svg>
<svg style="left:1402px;top:155px" width="20" height="28" viewBox="0 0 20 28"><path d="M10 1 V25 M2 17 L10 26 L18 17" stroke="#afb1b3" stroke-width="3" fill="none"/></svg>
<svg style="left:1450px;top:155px" width="27" height="28" viewBox="0 0 27 28"><circle cx="13" cy="11" r="10" stroke="#5f6163" stroke-width="4" fill="none"/><path d="M3 20 H23 V28 H3 Z" fill="#5f6163"/></svg>
<div class="a" style="left:1496px;top:148px;width:2px;height:40px;background:#4f5254;"></div>
<div class="a" style="left:1666px;top:148px;width:2px;height:40px;background:#4f5254;"></div>
<svg style="left:1516px;top:155px" width="32" height="30" viewBox="0 0 32 30"><path d="M10 0 V20 M0 10 H20" stroke="#5f6163" stroke-width="3"/><path d="M16 18 V30 M22 18 V30 M14 18 H24 M14 30 H24" stroke="#5f6163" stroke-width="1.6"/></svg>
<svg style="left:1567px;top:155px" width="32" height="30" viewBox="0 0 32 30"><path d="M0 10 H20" stroke="#5f6163" stroke-width="3"/><path d="M16 18 V30 M22 18 V30 M14 18 H24 M14 30 H24" stroke="#5f6163" stroke-width="1.6"/></svg>
<svg style="left:1618px;top:155px" width="32" height="30" viewBox="0 0 32 30"><rect x="1" y="1" width="17" height="15" stroke="#5f6163" stroke-width="2" fill="none"/><path d="M4 8 L9 13 L20 2" stroke="#5f6163" stroke-width="2.4" fill="none"/><path d="M16 18 V30 M22 18 V30 M14 18 H24 M14 30 H24" stroke="#5f6163" stroke-width="1.6"/></svg>
<svg style="left:1687px;top:155px" width="31" height="30" viewBox="0 0 31 30"><path d="M0 0 H26 L16 12 V24 L10 24 V12 Z" fill="#afb1b3"/><path d="M20 24 H31 L25.5 30 Z" fill="#dddddd"/></svg>
<div class="a" style="left:1765px;top:155px;width:27px;height:27px;border:2px solid #6b6e70;border-radius:4px;background:#43474a"></div>
<div class="ui" style="left:1804px;top:158.11px;font-size:23.5px;color:#bbbbbb;">Match Case</div>
<div class="a" style="left:1953px;top:155px;width:27px;height:27px;border:2px solid #6b6e70;border-radius:4px;background:#43474a"></div>
<div class="ui" style="left:1993px;top:158.11px;font-size:23.5px;color:#bbbbbb;">Words</div>
<div class="a" style="left:2085px;top:155px;width:27px;height:27px;border:2px solid #6b6e70;border-radius:4px;background:#43474a"></div>
<div class="ui" style="left:2125px;top:158.11px;font-size:23.5px;color:#bbbbbb;">Regex</div>
<div class="ui" style="left:2204px;top:155.99px;font-size:26px;color:#589df6;font-weight:bold">?</div>
<div class="a" style="left:0px;top:0px;width:40px;height:40px;background:#46494b;border-radius:0 0 6px 0"></div>
<svg style="left:5px;top:7px" width="29" height="22" viewBox="0 0 29 22"><path d="M0 0 H10 L12 3 H24 V7 H6 L0 21 Z" fill="#afb1b3"/><path d="M7 9 H29 L23 21 H1 Z" fill="#afb1b3"/></svg>
<svg style="left:58px;top:6px" width="25" height="24" viewBox="0 0 25 24"><path d="M0 0 H25 V24 H0 Z" fill="#afb1b3"/><rect x="4" y="4" width="17" height="11" fill="#3c3f41"/><rect x="7.5" y="19" width="10" height="5" fill="#3c3f41"/><rect x="10" y="21" width="5" height="3" fill="#afb1b3"/></svg>
<svg style="left:110px;top:6px" width="24" height="24" viewBox="0 0 24 24"><path d="M20.5 12.5 A8.6 8.6 0 0 0 5.5 7" stroke="#afb1b3" stroke-width="3.2" fill="none"/><path d="M0.5 1.5 L8.5 9.5 L0.5 9.5 Z" fill="#afb1b3"/><path d="M3.5 11.5 A8.6 8.6 0 0 0 18.5 17" stroke="#afb1b3" stroke-width="3.2" fill="none"/><path d="M23.5 22.5 L15.5 14.5 L23.5 14.5 Z" fill="#afb1b3"/></svg>
<div class="a" style="left:154px;top:3px;width:2px;height:34px;background:#4f5254;"></div>
<div class="a" style="left:272px;top:3px;width:2px;height:34px;background:#4f5254;"></div>
<div class="a" style="left:802px;top:3px;width:2px;height:34px;background:#4f5254;"></div>
<div class="a" style="left:1134px;top:3px;width:2px;height:34px;background:#4f5254;"></div>
<div class="a" style="left:1200px;top:3px;width:2px;height:34px;background:#4f5254;"></div>
<div class="a" style="left:1318px;top:3px;width:2px;height:34px;background:#4f5254;"></div>
<svg style="left:174px;top:8px" width="27" height="20" viewBox="0 0 27 20"><path d="M1 10 H26 M10 1 L1 10 L10 19" stroke="#afb1b3" stroke-width="3.2" fill="none"/></svg>
<svg style="left:228px;top:8px" width="27" height="20" viewBox="0 0 27 20"><path d="M0 10 H25 M16 1 L25 10 L16 19" stroke="#6b6d6f" stroke-width="3.2" fill="none"/></svg>
<div class="a" style="left:292px;top:-4px;width:234px;height:43px;border:2px solid #5e6163;border-radius:7px"></div>
<div class="ui" style="left:306px;top:7.70px;font-size:22.8px;color:#bbbbbb;">Add Configuration...</div>
<svg style="left:554px;top:7px" width="20" height="23" viewBox="0 0 20 23"><path d="M0 0 L20 11.5 L0 23 Z" fill="#5a5d5f"/></svg>
<svg style="left:602px;top:5px" width="24" height="27" viewBox="0 0 24 27"><ellipse cx="12" cy="15" rx="9" ry="11" fill="#5a5d5f"/><path d="M6 2 L10 7 M18 2 L14 7" stroke="#5a5d5f" stroke-width="2.4"/><rect x="0" y="10" width="24" height="2.4" fill="#5a5d5f"/><rect x="0" y="17" width="24" height="2.4" fill="#5a5d5f"/><rect x="7" y="11" width="10" height="2" fill="#3c3f41"/><rect x="7" y="18" width="10" height="2" fill="#3c3f41"/></svg>
<svg style="left:652px;top:6px" width="29" height="27" viewBox="0 0 29 27"><path d="M0 2 Q8 0 15 2 V14 Q15 22 8 25 Q0 22 0 14 Z" fill="#5a5d5f"/><path d="M16 12 L29 19 L16 27 Z" fill="#5a5d5f"/></svg>
<svg style="left:704px;top:5px" width="32" height="30" viewBox="0 0 32 30"><circle cx="12" cy="12" r="10" stroke="#5a5d5f" stroke-width="3" fill="none"/><path d="M12 6 V13 L9 16" stroke="#5a5d5f" stroke-width="2" fill="none"/><path d="M17 12 L30 21 L17 29 Z M21 27 L32 27 L26.5 33 Z" fill="#5a5d5f"/></svg>
<div class="a" style="left:760px;top:8px;width:20px;height:20px;background:#5a5d5f;"></div>
<div class="ui" style="left:823px;top:6.35px;font-size:24.4px;color:#bbbbbb;">Git:</div>
<svg style="left:884px;top:6px" width="22" height="23" viewBox="0 0 22 23"><path d="M21 1 L5 18" stroke="#3592c4" stroke-width="3.6"/><path d="M0 9 V23 H14 Z" fill="#3592c4"/></svg>
<svg style="left:934px;top:6px" width="27" height="22" viewBox="0 0 27 22"><path d="M2 11 L9 18 L25 2" stroke="#499c54" stroke-width="4.2" fill="none"/></svg>
<svg style="left:984px;top:4px" width="28" height="28" viewBox="0 0 28 28"><path d="M28 8 H18 M0 20 H10" stroke="#3592c4" stroke-width="3.4"/><path d="M20 0 V16 L12 8 Z M8 12 V28 L16 20 Z" fill="#3592c4"/></svg>
<svg style="left:1036px;top:4px" width="28" height="28" viewBox="0 0 28 28"><circle cx="14" cy="14" r="12" stroke="#afb1b3" stroke-width="3.4" fill="none"/><path d="M13 7 V15 L19 19" stroke="#afb1b3" stroke-width="3" fill="none"/></svg>
<svg style="left:1091px;top:6px" width="25" height="24" viewBox="0 0 25 24"><path d="M6 6 H15 A8 8 0 0 1 15 22 H8" stroke="#5f6163" stroke-width="3.4" fill="none"/><path d="M0 6 L8 0 V12 Z" fill="#5f6163"/></svg>
<svg style="left:1154px;top:4px" width="28" height="28" viewBox="0 0 28 28"><path d="M2 26 L14 14" stroke="#afb1b3" stroke-width="4.5" stroke-linecap="square"/><circle cx="19" cy="9" r="7" fill="#afb1b3"/><path d="M19 2 L26 9 L22 5 Z" fill="#3c3f41"/><rect x="18" y="0" width="6" height="7" fill="#3c3f41" transform="rotate(45 21 4)"/></svg>
<svg style="left:1220px;top:6px" width="28" height="24" viewBox="0 0 28 24"><rect x="0" y="0" width="28" height="24" fill="#afb1b3"/><rect x="2" y="6" width="24" height="16" fill="#2b2b2b"/><path d="M6 8 L15 14 L6 20 Z" fill="#499c54"/></svg>
<svg style="left:1272px;top:4px" width="28" height="28" viewBox="0 0 28 28"><circle cx="11" cy="11" r="9" stroke="#afb1b3" stroke-width="3.2" fill="none"/><path d="M17 17 L27 27" stroke="#afb1b3" stroke-width="3.6"/></svg>
<svg style="left:1336px;top:6px" width="32" height="28" viewBox="0 0 32 28"><rect x="4" y="0" width="12" height="20" fill="#afb1b3"/><rect x="0" y="4" width="24" height="2" fill="#afb1b3"/><rect x="0" y="9" width="24" height="2" fill="#afb1b3"/><rect x="0" y="14" width="24" height="2" fill="#afb1b3"/><rect x="16" y="12" width="16" height="16" fill="#afb1b3"/><rect x="19" y="15" width="10" height="5" fill="#3c3f41"/><rect x="22" y="24" width="4" height="4" fill="#3c3f41"/></svg>
<svg style="left:8px;top:58px;" width="28" height="22" viewBox="0 0 28 22"><path d="M0 0 H10 L13 3.5 H28 V22 H0 Z" fill="#8c9aa4"/></svg>
<div class="ui" style="left:44px;top:55.99px;font-size:26px;color:#bbbbbb;font-weight:bold">kubernetes</div>
<svg style="left:210px;top:58px;" width="28" height="22" viewBox="0 0 28 22"><path d="M0 0 H10 L13 3.5 H28 V22 H0 Z" fill="#8c9aa4"/></svg>
<div class="ui" style="left:246px;top:55.99px;font-size:26px;color:#bbbbbb;">cmd</div>
<svg style="left:321px;top:58px;" width="28" height="22" viewBox="0 0 28 22"><path d="M0 0 H10 L13 3.5 H28 V22 H0 Z" fill="#8c9aa4"/></svg>
<div class="ui" style="left:359px;top:55.99px;font-size:26px;color:#bbbbbb;">kube-scheduler</div>
<svg style="left:564px;top:58px;" width="28" height="22" viewBox="0 0 28 22"><path d="M0 0 H10 L13 3.5 H28 V22 H0 Z" fill="#8c9aa4"/></svg>
<div class="ui" style="left:600px;top:55.99px;font-size:26px;color:#bbbbbb;">app</div>
<svg style="left:670px;top:58px;" width="28" height="22" viewBox="0 0 28 22"><path d="M0 0 H10 L13 3.5 H28 V22 H0 Z" fill="#8c9aa4"/></svg>
<div class="ui" style="left:706px;top:55.99px;font-size:26px;color:#bbbbbb;">config</div>
<svg style="left:190px;top:54px" width="10" height="34" viewBox="0 0 10 34"><path d="M1 0 L9 17 L1 34" stroke="#5d5f61" stroke-width="1.6" fill="none"/></svg>
<svg style="left:302px;top:54px" width="10" height="34" viewBox="0 0 10 34"><path d="M1 0 L9 17 L1 34" stroke="#5d5f61" stroke-width="1.6" fill="none"/></svg>
<svg style="left:544px;top:54px" width="10" height="34" viewBox="0 0 10 34"><path d="M1 0 L9 17 L1 34" stroke="#5d5f61" stroke-width="1.6" fill="none"/></svg>
<svg style="left:650px;top:54px" width="10" height="34" viewBox="0 0 10 34"><path d="M1 0 L9 17 L1 34" stroke="#5d5f61" stroke-width="1.6" fill="none"/></svg>
<svg style="left:784px;top:54px" width="10" height="34" viewBox="0 0 10 34"><path d="M1 0 L9 17 L1 34" stroke="#5d5f61" stroke-width="1.6" fill="none"/></svg>
<svg style="left:808px;top:55px;" width="20" height="28" viewBox="0 0 20 28"><circle cx="2.6" cy="5" r="2.2" fill="#7ab8dd"/>
 <circle cx="17.4" cy="5" r="2.2" fill="#7ab8dd"/>
 <path d="M1.6 12 Q1.6 0 10 0 Q18.4 0 18.4 12 L18.4 21 Q18.4 27.5 10 27.5 Q1.6 27.5 1.6 21 Z" fill="#7ab8dd"/>
 <circle cx="6.3" cy="8" r="3" fill="#fff"/><circle cx="13" cy="8" r="3" fill="#fff"/>
 <circle cx="6.3" cy="8" r="1.3" fill="#000"/><circle cx="13" cy="8" r="1.3" fill="#000"/>
 <circle cx="9.6" cy="10.8" r="1.1" fill="#111"/>
 <rect x="8.6" y="12.6" width="2.2" height="1.4" fill="#eef"/>
 <rect x="0" y="13.5" width="2" height="2" fill="#c9c2ba"/><rect x="18" y="13.5" width="2" height="2" fill="#c9c2ba"/>
 <rect x="2.5" y="25.5" width="2.5" height="2.5" fill="#c9c2ba"/><rect x="15" y="25.5" width="2.5" height="2.5" fill="#c9c2ba"/></svg>
<div class="ui" style="left:840px;top:55.99px;font-size:26px;color:#bbbbbb;">config.go</div>
<svg style="left:50px;top:106px" width="28" height="26" viewBox="0 0 28 26"><rect x="0" y="0" width="28" height="26" fill="#9aa7b0"/><rect x="2" y="6" width="24" height="18" fill="#2b2d2e"/><rect x="4" y="8" width="20" height="14" fill="#3592c4"/></svg>
<div class="ui" style="left:89px;top:106.40px;font-size:26.7px;color:#bbbbbb;">Project</div>
<svg style="left:187px;top:116px" width="18" height="10" viewBox="0 0 18 10"><path d="M0 0 H18 L9 10 Z" fill="#afb1b3"/></svg>
<svg style="left:402px;top:104px" width="28" height="28" viewBox="0 0 28 28"><circle cx="14" cy="14" r="11.8" stroke="#afb1b3" stroke-width="4" fill="none"/><path d="M14 3 V10 M14 18 V25 M3 14 H10 M18 14 H25" stroke="#afb1b3" stroke-width="3.6"/></svg>
<svg style="left:456px;top:105px" width="24" height="26" viewBox="0 0 24 26"><rect x="0" y="11" width="24" height="4" fill="#afb1b3"/><path d="M5 1 H19 L12 8 Z M5 25 H19 L12 18 Z" fill="#afb1b3"/></svg>
<div class="a" style="left:500px;top:98px;width:2px;height:40px;background:#4f5254;"></div>
<svg style="left:521px;top:105px" width="26" height="26" viewBox="0 0 26 26"><circle cx="13" cy="13" r="9" fill="#afb1b3"/><rect x="10" y="0" width="6" height="26" rx="1" fill="#afb1b3" transform="rotate(0 13 13)"/><rect x="10" y="0" width="6" height="26" rx="1" fill="#afb1b3" transform="rotate(60 13 13)"/><rect x="10" y="0" width="6" height="26" rx="1" fill="#afb1b3" transform="rotate(120 13 13)"/><circle cx="13" cy="13" r="4.2" fill="#3c3f41"/></svg>
<div class="a" style="left:574px;top:116px;width:24px;height:4px;background:#afb1b3;"></div>
<div class="ui" style="left:-2px;top:206px;font-size:23px;color:#e0e0e0;transform:rotate(-90deg);transform-origin:0 0;width:100px">1: Project</div>
<svg style="left:0px;top:218px" width="20" height="18" viewBox="0 0 20 18"><path d="M-8 0 H4 L7 3 H20 V18 H-8 Z" fill="#b8b8b8"/></svg>
<div class="ui" style="left:-3px;top:2967px;font-size:23px;color:#c8c8c8;transform:rotate(-90deg);transform-origin:0 0;width:120px">Structure</div>
<svg style="left:37px;top:156px;" width="17" height="17" viewBox="0 0 17 17"><path d="M0 0 H17 L8.5 16 Z" fill="#a8a8a8"/></svg>
<svg style="left:72px;top:152px;" width="28" height="22" viewBox="0 0 28 22"><path d="M0 0 H10 L13 3.5 H28 V22 H0 Z" fill="#8c9aa4"/></svg>
<div class="tr" style="left:108px;top:144px;color:#bbbbbb;font-weight:bold;">kubernetes</div>
<div class="tr" style="left:272px;top:144px;color:#8f9294">~/go/src/k8s.io/kubernetes</div>
<svg style="left:73px;top:194px;" width="17" height="17" viewBox="0 0 17 17"><path d="M0 0 L17 8.5 L0 17 Z" fill="#a8a8a8"/></svg>
<svg style="left:108px;top:190px;" width="28" height="22" viewBox="0 0 28 22"><path d="M0 0 H10 L13 3.5 H28 V22 H0 Z" fill="#8c9aa4"/></svg>
<div class="tr" style="left:144px;top:182px;color:#bbbbbb;">.github</div>
<svg style="left:73px;top:232px;" width="17" height="17" viewBox="0 0 17 17"><path d="M0 0 L17 8.5 L0 17 Z" fill="#a8a8a8"/></svg>
<svg style="left:108px;top:228px;" width="28" height="22" viewBox="0 0 28 22"><path d="M0 0 H10 L13 3.5 H28 V22 H0 Z" fill="#8c9aa4"/></svg>
<div class="tr" style="left:144px;top:220px;color:#bbbbbb;">api</div>
<svg style="left:73px;top:270px;" width="17" height="17" viewBox="0 0 17 17"><path d="M0 0 L17 8.5 L0 17 Z" fill="#a8a8a8"/></svg>
<svg style="left:108px;top:266px;" width="28" height="22" viewBox="0 0 28 22"><path d="M0 0 H10 L13 3.5 H28 V22 H0 Z" fill="#8c9aa4"/></svg>
<div class="tr" style="left:144px;top:258px;color:#bbbbbb;">build</div>
<svg style="left:73px;top:308px;" width="17" height="17" viewBox="0 0 17 17"><path d="M0 0 L17 8.5 L0 17 Z" fill="#a8a8a8"/></svg>
<svg style="left:108px;top:304px;" width="28" height="22" viewBox="0 0 28 22"><path d="M0 0 H10 L13 3.5 H28 V22 H0 Z" fill="#8c9aa4"/></svg>
<div class="tr" style="left:144px;top:296px;color:#bbbbbb;">cluster</div>
<svg style="left:73px;top:346px;" width="17" height="17" viewBox="0 0 17 17"><path d="M0 0 H17 L8.5 16 Z" fill="#a8a8a8"/></svg>
<svg style="left:108px;top:342px;" width="28" height="22" viewBox="0 0 28 22"><path d="M0 0 H10 L13 3.5 H28 V22 H0 Z" fill="#8c9aa4"/></svg>
<div class="tr" style="left:144px;top:334px;color:#bbbbbb;">cmd</div>
<svg style="left:109px;top:384px;" width="17" height="17" viewBox="0 0 17 17"><path d="M0 0 L17 8.5 L0 17 Z" fill="#a8a8a8"/></svg>
<svg style="left:144px;top:380px;" width="28" height="22" viewBox="0 0 28 22"><path d="M0 0 H10 L13 3.5 H28 V22 H0 Z" fill="#8c9aa4"/></svg>
<div class="tr" style="left:180px;top:372px;color:#bbbbbb;">clicheck</div>
<svg style="left:109px;top:422px;" width="17" height="17" viewBox="0 0 17 17"><path d="M0 0 L17 8.5 L0 17 Z" fill="#a8a8a8"/></svg>
<svg style="left:144px;top:418px;" width="28" height="22" viewBox="0 0 28 22"><path d="M0 0 H10 L13 3.5 H28 V22 H0 Z" fill="#8c9aa4"/></svg>
<div class="tr" style="left:180px;top:410px;color:#bbbbbb;">cloud-controller-manager</div>
<svg style="left:109px;top:460px;" width="17" height="17" viewBox="0 0 17 17"><path d="M0 0 L17 8.5 L0 17 Z" fill="#a8a8a8"/></svg>
<svg style="left:144px;top:456px;" width="28" height="22" viewBox="0 0 28 22"><path d="M0 0 H10 L13 3.5 H28 V22 H0 Z" fill="#8c9aa4"/></svg>
<div class="tr" style="left:180px;top:448px;color:#bbbbbb;">controller-manager</div>
<svg style="left:109px;top:498px;" width="17" height="17" viewBox="0 0 17 17"><path d="M0 0 L17 8.5 L0 17 Z" fill="#a8a8a8"/></svg>
<svg style="left:144px;top:494px;" width="28" height="22" viewBox="0 0 28 22"><path d="M0 0 H10 L13 3.5 H28 V22 H0 Z" fill="#8c9aa4"/></svg>
<div class="tr" style="left:180px;top:486px;color:#bbbbbb;">gendocs</div>
<svg style="left:109px;top:536px;" width="17" height="17" viewBox="0 0 17 17"><path d="M0 0 L17 8.5 L0 17 Z" fill="#a8a8a8"/></svg>
<svg style="left:144px;top:532px;" width="28" height="22" viewBox="0 0 28 22"><path d="M0 0 H10 L13 3.5 H28 V22 H0 Z" fill="#8c9aa4"/></svg>
<div class="tr" style="left:180px;top:524px;color:#bbbbbb;">genkubedocs</div>
<svg style="left:109px;top:574px;" width="17" height="17" viewBox="0 0 17 17"><path d="M0 0 L17 8.5 L0 17 Z" fill="#a8a8a8"/></svg>
<svg style="left:144px;top:570px;" width="28" height="22" viewBox="0 0 28 22"><path d="M0 0 H10 L13 3.5 H28 V22 H0 Z" fill="#8c9aa4"/></svg>
<div class="tr" style="left:180px;top:562px;color:#bbbbbb;">genman</div>
<svg style="left:109px;top:612px;" width="17" height="17" viewBox="0 0 17 17"><path d="M0 0 L17 8.5 L0 17 Z" fill="#a8a8a8"/></svg>
<svg style="left:144px;top:608px;" width="28" height="22" viewBox="0 0 28 22"><path d="M0 0 H10 L13 3.5 H28 V22 H0 Z" fill="#8c9aa4"/></svg>
<div class="tr" style="left:180px;top:600px;color:#bbbbbb;">genswaggertypedocs</div>
<svg style="left:109px;top:650px;" width="17" height="17" viewBox="0 0 17 17"><path d="M0 0 L17 8.5 L0 17 Z" fill="#a8a8a8"/></svg>
<svg style="left:144px;top:646px;" width="28" height="22" viewBox="0 0 28 22"><path d="M0 0 H10 L13 3.5 H28 V22 H0 Z" fill="#8c9aa4"/></svg>
<div class="tr" style="left:180px;top:638px;color:#bbbbbb;">genutils</div>
<svg style="left:109px;top:688px;" width="17" height="17" viewBox="0 0 17 17"><path d="M0 0 L17 8.5 L0 17 Z" fill="#a8a8a8"/></svg>
<svg style="left:144px;top:684px;" width="28" height="22" viewBox="0 0 28 22"><path d="M0 0 H10 L13 3.5 H28 V22 H0 Z" fill="#8c9aa4"/></svg>
<div class="tr" style="left:180px;top:676px;color:#bbbbbb;">genyaml</div>
<svg style="left:109px;top:726px;" width="17" height="17" viewBox="0 0 17 17"><path d="M0 0 L17 8.5 L0 17 Z" fill="#a8a8a8"/></svg>
<svg style="left:144px;top:722px;" width="28" height="22" viewBox="0 0 28 22"><path d="M0 0 H10 L13 3.5 H28 V22 H0 Z" fill="#8c9aa4"/></svg>
<div class="tr" style="left:180px;top:714px;color:#bbbbbb;">hyperkube</div>
<svg style="left:109px;top:764px;" width="17" height="17" viewBox="0 0 17 17"><path d="M0 0 L17 8.5 L0 17 Z" fill="#a8a8a8"/></svg>
<svg style="left:144px;top:760px;" width="28" height="22" viewBox="0 0 28 22"><path d="M0 0 H10 L13 3.5 H28 V22 H0 Z" fill="#8c9aa4"/></svg>
<div class="tr" style="left:180px;top:752px;color:#bbbbbb;">importverifier</div>
<svg style="left:109px;top:802px;" width="17" height="17" viewBox="0 0 17 17"><path d="M0 0 L17 8.5 L0 17 Z" fill="#a8a8a8"/></svg>
<svg style="left:144px;top:798px;" width="28" height="22" viewBox="0 0 28 22"><path d="M0 0 H10 L13 3.5 H28 V22 H0 Z" fill="#8c9aa4"/></svg>
<div class="tr" style="left:180px;top:790px;color:#bbbbbb;">kube-apiserver</div>
<svg style="left:109px;top:840px;" width="17" height="17" viewBox="0 0 17 17"><path d="M0 0 L17 8.5 L0 17 Z" fill="#a8a8a8"/></svg>
<svg style="left:144px;top:836px;" width="28" height="22" viewBox="0 0 28 22"><path d="M0 0 H10 L13 3.5 H28 V22 H0 Z" fill="#8c9aa4"/></svg>
<div class="tr" style="left:180px;top:828px;color:#bbbbbb;">kube-controller-manager</div>
<svg style="left:109px;top:878px;" width="17" height="17" viewBox="0 0 17 17"><path d="M0 0 L17 8.5 L0 17 Z" fill="#a8a8a8"/></svg>
<svg style="left:144px;top:874px;" width="28" height="22" viewBox="0 0 28 22"><path d="M0 0 H10 L13 3.5 H28 V22 H0 Z" fill="#8c9aa4"/></svg>
<div class="tr" style="left:180px;top:866px;color:#bbbbbb;">kube-proxy</div>
<svg style="left:109px;top:916px;" width="17" height="17" viewBox="0 0 17 17"><path d="M0 0 H17 L8.5 16 Z" fill="#a8a8a8"/></svg>
<svg style="left:144px;top:912px;" width="28" height="22" viewBox="0 0 28 22"><path d="M0 0 H10 L13 3.5 H28 V22 H0 Z" fill="#8c9aa4"/></svg>
<div class="tr" style="left:180px;top:904px;color:#bbbbbb;">kube-scheduler</div>
<svg style="left:145px;top:954px;" width="17" height="17" viewBox="0 0 17 17"><path d="M0 0 H17 L8.5 16 Z" fill="#a8a8a8"/></svg>
<svg style="left:180px;top:950px;" width="28" height="22" viewBox="0 0 28 22"><path d="M0 0 H10 L13 3.5 H28 V22 H0 Z" fill="#8c9aa4"/></svg>
<div class="tr" style="left:216px;top:942px;color:#bbbbbb;">app</div>
<svg style="left:181px;top:992px;" width="17" height="17" viewBox="0 0 17 17"><path d="M0 0 L17 8.5 L0 17 Z" fill="#a8a8a8"/></svg>
<svg style="left:216px;top:988px;" width="28" height="22" viewBox="0 0 28 22"><path d="M0 0 H10 L13 3.5 H28 V22 H0 Z" fill="#8c9aa4"/></svg>
<div class="tr" style="left:252px;top:980px;color:#bbbbbb;">config</div>
<svg style="left:181px;top:1030px;" width="17" height="17" viewBox="0 0 17 17"><path d="M0 0 H17 L8.5 16 Z" fill="#a8a8a8"/></svg>
<svg style="left:216px;top:1026px;" width="28" height="22" viewBox="0 0 28 22"><path d="M0 0 H10 L13 3.5 H28 V22 H0 Z" fill="#8c9aa4"/></svg>
<div class="tr" style="left:252px;top:1018px;color:#bbbbbb;">options</div>
<svg style="left:256px;top:1061px;" width="20" height="28" viewBox="0 0 20 28"><path d="M9.5 0 H20 V28 H0 V10 H9.5 Z" fill="#8c9aa4"/>
 <path d="M0 7.5 L8 0 V7.5 Z" fill="#9aa6ae"/>
 <rect x="4" y="12" width="12" height="2" fill="#3c3f41"/>
 <rect x="4" y="16" width="12" height="2" fill="#3c3f41"/>
 <rect x="4" y="20" width="8" height="2" fill="#3c3f41"/></svg>
<div class="tr" style="left:288px;top:1056px;color:#bbbbbb;">BUILD</div>
<svg style="left:256px;top:1099px;" width="20" height="28" viewBox="0 0 20 28"><circle cx="2.6" cy="5" r="2.2" fill="#7ab8dd"/>
 <circle cx="17.4" cy="5" r="2.2" fill="#7ab8dd"/>
 <path d="M1.6 12 Q1.6 0 10 0 Q18.4 0 18.4 12 L18.4 21 Q18.4 27.5 10 27.5 Q1.6 27.5 1.6 21 Z" fill="#7ab8dd"/>
 <circle cx="6.3" cy="8" r="3" fill="#fff"/><circle cx="13" cy="8" r="3" fill="#fff"/>
 <circle cx="6.3" cy="8" r="1.3" fill="#000"/><circle cx="13" cy="8" r="1.3" fill="#000"/>
 <circle cx="9.6" cy="10.8" r="1.1" fill="#111"/>
 <rect x="8.6" y="12.6" width="2.2" height="1.4" fill="#eef"/>
 <rect x="0" y="13.5" width="2" height="2" fill="#c9c2ba"/><rect x="18" y="13.5" width="2" height="2" fill="#c9c2ba"/>
 <rect x="2.5" y="25.5" width="2.5" height="2.5" fill="#c9c2ba"/><rect x="15" y="25.5" width="2.5" height="2.5" fill="#c9c2ba"/></svg>
<div class="tr" style="left:288px;top:1094px;color:#bbbbbb;">configfile.go</div>
<svg style="left:256px;top:1137px;" width="20" height="28" viewBox="0 0 20 28"><circle cx="2.6" cy="5" r="2.2" fill="#7ab8dd"/>
 <circle cx="17.4" cy="5" r="2.2" fill="#7ab8dd"/>
 <path d="M1.6 12 Q1.6 0 10 0 Q18.4 0 18.4 12 L18.4 21 Q18.4 27.5 10 27.5 Q1.6 27.5 1.6 21 Z" fill="#7ab8dd"/>
 <circle cx="6.3" cy="8" r="3" fill="#fff"/><circle cx="13" cy="8" r="3" fill="#fff"/>
 <circle cx="6.3" cy="8" r="1.3" fill="#000"/><circle cx="13" cy="8" r="1.3" fill="#000"/>
 <circle cx="9.6" cy="10.8" r="1.1" fill="#111"/>
 <rect x="8.6" y="12.6" width="2.2" height="1.4" fill="#eef"/>
 <rect x="0" y="13.5" width="2" height="2" fill="#c9c2ba"/><rect x="18" y="13.5" width="2" height="2" fill="#c9c2ba"/>
 <rect x="2.5" y="25.5" width="2.5" height="2.5" fill="#c9c2ba"/><rect x="15" y="25.5" width="2.5" height="2.5" fill="#c9c2ba"/></svg>
<div class="tr" style="left:288px;top:1132px;color:#bbbbbb;">deprecated.go</div>
<div class="a" style="left:30px;top:1170px;width:584px;height:38px;background:#49524a;"></div>
<svg style="left:256px;top:1175px;" width="20" height="28" viewBox="0 0 20 28"><circle cx="2.6" cy="5" r="2.2" fill="#7ab8dd"/>
 <circle cx="17.4" cy="5" r="2.2" fill="#7ab8dd"/>
 <path d="M1.6 12 Q1.6 0 10 0 Q18.4 0 18.4 12 L18.4 21 Q18.4 27.5 10 27.5 Q1.6 27.5 1.6 21 Z" fill="#7ab8dd"/>
 <circle cx="6.3" cy="8" r="3" fill="#fff"/><circle cx="13" cy="8" r="3" fill="#fff"/>
 <circle cx="6.3" cy="8" r="1.3" fill="#000"/><circle cx="13" cy="8" r="1.3" fill="#000"/>
 <circle cx="9.6" cy="10.8" r="1.1" fill="#111"/>
 <rect x="8.6" y="12.6" width="2.2" height="1.4" fill="#eef"/>
 <rect x="0" y="13.5" width="2" height="2" fill="#c9c2ba"/><rect x="18" y="13.5" width="2" height="2" fill="#c9c2ba"/>
 <rect x="2.5" y="25.5" width="2.5" height="2.5" fill="#c9c2ba"/><rect x="15" y="25.5" width="2.5" height="2.5" fill="#c9c2ba"/></svg>
<svg style="left:264px;top:1188px" width="14" height="14" viewBox="0 0 14 14"><path d="M7 2 L0 7 L7 12 Z" fill="#e2572c"/><path d="M7 2 L14 7 L7 12 Z" fill="#59a869"/></svg>
<div class="tr" style="left:288px;top:1170px;color:#bbbbbb;">deprecated_test.go</div>
<svg style="left:256px;top:1213px;" width="20" height="28" viewBox="0 0 20 28"><circle cx="2.6" cy="5" r="2.2" fill="#7ab8dd"/>
 <circle cx="17.4" cy="5" r="2.2" fill="#7ab8dd"/>
 <path d="M1.6 12 Q1.6 0 10 0 Q18.4 0 18.4 12 L18.4 21 Q18.4 27.5 10 27.5 Q1.6 27.5 1.6 21 Z" fill="#7ab8dd"/>
 <circle cx="6.3" cy="8" r="3" fill="#fff"/><circle cx="13" cy="8" r="3" fill="#fff"/>
 <circle cx="6.3" cy="8" r="1.3" fill="#000"/><circle cx="13" cy="8" r="1.3" fill="#000"/>
 <circle cx="9.6" cy="10.8" r="1.1" fill="#111"/>
 <rect x="8.6" y="12.6" width="2.2" height="1.4" fill="#eef"/>
 <rect x="0" y="13.5" width="2" height="2" fill="#c9c2ba"/><rect x="18" y="13.5" width="2" height="2" fill="#c9c2ba"/>
 <rect x="2.5" y="25.5" width="2.5" height="2.5" fill="#c9c2ba"/><rect x="15" y="25.5" width="2.5" height="2.5" fill="#c9c2ba"/></svg>
<div class="tr" style="left:288px;top:1208px;color:#bbbbbb;">insecure_serving.go</div>
<div class="a" style="left:30px;top:1246px;width:584px;height:38px;background:#49524a;"></div>
<svg style="left:256px;top:1251px;" width="20" height="28" viewBox="0 0 20 28"><circle cx="2.6" cy="5" r="2.2" fill="#7ab8dd"/>
 <circle cx="17.4" cy="5" r="2.2" fill="#7ab8dd"/>
 <path d="M1.6 12 Q1.6 0 10 0 Q18.4 0 18.4 12 L18.4 21 Q18.4 27.5 10 27.5 Q1.6 27.5 1.6 21 Z" fill="#7ab8dd"/>
 <circle cx="6.3" cy="8" r="3" fill="#fff"/><circle cx="13" cy="8" r="3" fill="#fff"/>
 <circle cx="6.3" cy="8" r="1.3" fill="#000"/><circle cx="13" cy="8" r="1.3" fill="#000"/>
 <circle cx="9.6" cy="10.8" r="1.1" fill="#111"/>
 <rect x="8.6" y="12.6" width="2.2" height="1.4" fill="#eef"/>
 <rect x="0" y="13.5" width="2" height="2" fill="#c9c2ba"/><rect x="18" y="13.5" width="2" height="2" fill="#c9c2ba"/>
 <rect x="2.5" y="25.5" width="2.5" height="2.5" fill="#c9c2ba"/><rect x="15" y="25.5" width="2.5" height="2.5" fill="#c9c2ba"/></svg>
<svg style="left:264px;top:1264px" width="14" height="14" viewBox="0 0 14 14"><path d="M7 2 L0 7 L7 12 Z" fill="#e2572c"/><path d="M7 2 L14 7 L7 12 Z" fill="#59a869"/></svg>
<div class="tr" style="left:288px;top:1246px;color:#bbbbbb;">insecure_serving_test.go</div>
<svg style="left:256px;top:1289px;" width="20" height="28" viewBox="0 0 20 28"><circle cx="2.6" cy="5" r="2.2" fill="#7ab8dd"/>
 <circle cx="17.4" cy="5" r="2.2" fill="#7ab8dd"/>
 <path d="M1.6 12 Q1.6 0 10 0 Q18.4 0 18.4 12 L18.4 21 Q18.4 27.5 10 27.5 Q1.6 27.5 1.6 21 Z" fill="#7ab8dd"/>
 <circle cx="6.3" cy="8" r="3" fill="#fff"/><circle cx="13" cy="8" r="3" fill="#fff"/>
 <circle cx="6.3" cy="8" r="1.3" fill="#000"/><circle cx="13" cy="8" r="1.3" fill="#000"/>
 <circle cx="9.6" cy="10.8" r="1.1" fill="#111"/>
 <rect x="8.6" y="12.6" width="2.2" height="1.4" fill="#eef"/>
 <rect x="0" y="13.5" width="2" height="2" fill="#c9c2ba"/><rect x="18" y="13.5" width="2" height="2" fill="#c9c2ba"/>
 <rect x="2.5" y="25.5" width="2.5" height="2.5" fill="#c9c2ba"/><rect x="15" y="25.5" width="2.5" height="2.5" fill="#c9c2ba"/></svg>
<div class="tr" style="left:288px;top:1284px;color:#bbbbbb;">options.go</div>
<div class="a" style="left:30px;top:1322px;width:584px;height:38px;background:#49524a;"></div>
<svg style="left:256px;top:1327px;" width="20" height="28" viewBox="0 0 20 28"><circle cx="2.6" cy="5" r="2.2" fill="#7ab8dd"/>
 <circle cx="17.4" cy="5" r="2.2" fill="#7ab8dd"/>
 <path d="M1.6 12 Q1.6 0 10 0 Q18.4 0 18.4 12 L18.4 21 Q18.4 27.5 10 27.5 Q1.6 27.5 1.6 21 Z" fill="#7ab8dd"/>
 <circle cx="6.3" cy="8" r="3" fill="#fff"/><circle cx="13" cy="8" r="3" fill="#fff"/>
 <circle cx="6.3" cy="8" r="1.3" fill="#000"/><circle cx="13" cy="8" r="1.3" fill="#000"/>
 <circle cx="9.6" cy="10.8" r="1.1" fill="#111"/>
 <rect x="8.6" y="12.6" width="2.2" height="1.4" fill="#eef"/>
 <rect x="0" y="13.5" width="2" height="2" fill="#c9c2ba"/><rect x="18" y="13.5" width="2" height="2" fill="#c9c2ba"/>
 <rect x="2.5" y="25.5" width="2.5" height="2.5" fill="#c9c2ba"/><rect x="15" y="25.5" width="2.5" height="2.5" fill="#c9c2ba"/></svg>
<svg style="left:264px;top:1340px" width="14" height="14" viewBox="0 0 14 14"><path d="M7 2 L0 7 L7 12 Z" fill="#e2572c"/><path d="M7 2 L14 7 L7 12 Z" fill="#59a869"/></svg>
<div class="tr" style="left:288px;top:1322px;color:#bbbbbb;">options_test.go</div>
<svg style="left:181px;top:1372px;" width="17" height="17" viewBox="0 0 17 17"><path d="M0 0 L17 8.5 L0 17 Z" fill="#a8a8a8"/></svg>
<svg style="left:216px;top:1368px;" width="28" height="22" viewBox="0 0 28 22"><path d="M0 0 H10 L13 3.5 H28 V22 H0 Z" fill="#8c9aa4"/></svg>
<div class="tr" style="left:252px;top:1360px;color:#bbbbbb;">testing</div>
<svg style="left:220px;top:1403px;" width="20" height="28" viewBox="0 0 20 28"><path d="M9.5 0 H20 V28 H0 V10 H9.5 Z" fill="#8c9aa4"/>
 <path d="M0 7.5 L8 0 V7.5 Z" fill="#9aa6ae"/>
 <rect x="4" y="12" width="12" height="2" fill="#3c3f41"/>
 <rect x="4" y="16" width="12" height="2" fill="#3c3f41"/>
 <rect x="4" y="20" width="8" height="2" fill="#3c3f41"/></svg>
<div class="tr" style="left:252px;top:1398px;color:#bbbbbb;">BUILD</div>
<svg style="left:220px;top:1441px;" width="20" height="28" viewBox="0 0 20 28"><circle cx="2.6" cy="5" r="2.2" fill="#7ab8dd"/>
 <circle cx="17.4" cy="5" r="2.2" fill="#7ab8dd"/>
 <path d="M1.6 12 Q1.6 0 10 0 Q18.4 0 18.4 12 L18.4 21 Q18.4 27.5 10 27.5 Q1.6 27.5 1.6 21 Z" fill="#7ab8dd"/>
 <circle cx="6.3" cy="8" r="3" fill="#fff"/><circle cx="13" cy="8" r="3" fill="#fff"/>
 <circle cx="6.3" cy="8" r="1.3" fill="#000"/><circle cx="13" cy="8" r="1.3" fill="#000"/>
 <circle cx="9.6" cy="10.8" r="1.1" fill="#111"/>
 <rect x="8.6" y="12.6" width="2.2" height="1.4" fill="#eef"/>
 <rect x="0" y="13.5" width="2" height="2" fill="#c9c2ba"/><rect x="18" y="13.5" width="2" height="2" fill="#c9c2ba"/>
 <rect x="2.5" y="25.5" width="2.5" height="2.5" fill="#c9c2ba"/><rect x="15" y="25.5" width="2.5" height="2.5" fill="#c9c2ba"/></svg>
<div class="tr" style="left:252px;top:1436px;color:#bbbbbb;">server.go</div>
<svg style="left:184px;top:1479px;" width="20" height="28" viewBox="0 0 20 28"><path d="M9.5 0 H20 V28 H0 V10 H9.5 Z" fill="#8c9aa4"/>
 <path d="M0 7.5 L8 0 V7.5 Z" fill="#9aa6ae"/>
 <rect x="4" y="12" width="12" height="2" fill="#3c3f41"/>
 <rect x="4" y="16" width="12" height="2" fill="#3c3f41"/>
 <rect x="4" y="20" width="8" height="2" fill="#3c3f41"/></svg>
<div class="tr" style="left:216px;top:1474px;color:#bbbbbb;">BUILD</div>
<svg style="left:180px;top:1521px" width="28" height="22" viewBox="0 0 28 22"><rect x="0.5" y="0.5" width="27" height="21" fill="#1d1d1d" stroke="#c8c8c8" stroke-width="1.5"/><rect x="3" y="3" width="8" height="2" fill="#59a869"/></svg>
<div class="tr" style="left:216px;top:1512px;color:#d25a4e;">kube-scheduler</div>
<svg style="left:184px;top:1555px;" width="20" height="28" viewBox="0 0 20 28"><path d="M9.5 0 H20 V28 H0 V10 H9.5 Z" fill="#8c9aa4"/>
 <path d="M0 7.5 L8 0 V7.5 Z" fill="#9aa6ae"/>
 <rect x="4" y="12" width="12" height="2" fill="#3c3f41"/>
 <rect x="4" y="16" width="12" height="2" fill="#3c3f41"/>
 <rect x="4" y="20" width="8" height="2" fill="#3c3f41"/></svg>
<div class="tr" style="left:216px;top:1550px;color:#bbbbbb;">OWNERS</div>
<div class="a" style="left:30px;top:1588px;width:584px;height:38px;background:#0d293e;"></div>
<svg style="left:184px;top:1593px;" width="20" height="28" viewBox="0 0 20 28"><circle cx="2.6" cy="5" r="2.2" fill="#7ab8dd"/>
 <circle cx="17.4" cy="5" r="2.2" fill="#7ab8dd"/>
 <path d="M1.6 12 Q1.6 0 10 0 Q18.4 0 18.4 12 L18.4 21 Q18.4 27.5 10 27.5 Q1.6 27.5 1.6 21 Z" fill="#7ab8dd"/>
 <circle cx="6.3" cy="8" r="3" fill="#fff"/><circle cx="13" cy="8" r="3" fill="#fff"/>
 <circle cx="6.3" cy="8" r="1.3" fill="#000"/><circle cx="13" cy="8" r="1.3" fill="#000"/>
 <circle cx="9.6" cy="10.8" r="1.1" fill="#111"/>
 <rect x="8.6" y="12.6" width="2.2" height="1.4" fill="#eef"/>
 <rect x="0" y="13.5" width="2" height="2" fill="#c9c2ba"/><rect x="18" y="13.5" width="2" height="2" fill="#c9c2ba"/>
 <rect x="2.5" y="25.5" width="2.5" height="2.5" fill="#c9c2ba"/><rect x="15" y="25.5" width="2.5" height="2.5" fill="#c9c2ba"/></svg>
<div class="tr" style="left:216px;top:1588px;color:#bbbbbb;">scheduler.go</div>
<svg style="left:109px;top:1638px;" width="17" height="17" viewBox="0 0 17 17"><path d="M0 0 L17 8.5 L0 17 Z" fill="#a8a8a8"/></svg>
<svg style="left:144px;top:1634px;" width="28" height="22" viewBox="0 0 28 22"><path d="M0 0 H10 L13 3.5 H28 V22 H0 Z" fill="#8c9aa4"/></svg>
<div class="tr" style="left:180px;top:1626px;color:#bbbbbb;">kubeadm</div>
<svg style="left:109px;top:1676px;" width="17" height="17" viewBox="0 0 17 17"><path d="M0 0 L17 8.5 L0 17 Z" fill="#a8a8a8"/></svg>
<svg style="left:144px;top:1672px;" width="28" height="22" viewBox="0 0 28 22"><path d="M0 0 H10 L13 3.5 H28 V22 H0 Z" fill="#8c9aa4"/></svg>
<div class="tr" style="left:180px;top:1664px;color:#bbbbbb;">kubectl</div>
<svg style="left:109px;top:1714px;" width="17" height="17" viewBox="0 0 17 17"><path d="M0 0 L17 8.5 L0 17 Z" fill="#a8a8a8"/></svg>
<svg style="left:144px;top:1710px;" width="28" height="22" viewBox="0 0 28 22"><path d="M0 0 H10 L13 3.5 H28 V22 H0 Z" fill="#8c9aa4"/></svg>
<div class="tr" style="left:180px;top:1702px;color:#bbbbbb;">kubelet</div>
<svg style="left:109px;top:1752px;" width="17" height="17" viewBox="0 0 17 17"><path d="M0 0 L17 8.5 L0 17 Z" fill="#a8a8a8"/></svg>
<svg style="left:144px;top:1748px;" width="28" height="22" viewBox="0 0 28 22"><path d="M0 0 H10 L13 3.5 H28 V22 H0 Z" fill="#8c9aa4"/></svg>
<div class="tr" style="left:180px;top:1740px;color:#bbbbbb;">kubemark</div>
<svg style="left:109px;top:1790px;" width="17" height="17" viewBox="0 0 17 17"><path d="M0 0 L17 8.5 L0 17 Z" fill="#a8a8a8"/></svg>
<svg style="left:144px;top:1786px;" width="28" height="22" viewBox="0 0 28 22"><path d="M0 0 H10 L13 3.5 H28 V22 H0 Z" fill="#8c9aa4"/></svg>
<div class="tr" style="left:180px;top:1778px;color:#bbbbbb;">linkcheck</div>
<svg style="left:148px;top:1821px;" width="20" height="28" viewBox="0 0 20 28"><path d="M9.5 0 H20 V28 H0 V10 H9.5 Z" fill="#8c9aa4"/>
 <path d="M0 7.5 L8 0 V7.5 Z" fill="#9aa6ae"/>
 <rect x="4" y="12" width="12" height="2" fill="#3c3f41"/>
 <rect x="4" y="16" width="12" height="2" fill="#3c3f41"/>
 <rect x="4" y="20" width="8" height="2" fill="#3c3f41"/></svg>
<div class="tr" style="left:180px;top:1816px;color:#bbbbbb;">BUILD</div>
<svg style="left:148px;top:1859px;" width="20" height="28" viewBox="0 0 20 28"><path d="M9.5 0 H20 V28 H0 V10 H9.5 Z" fill="#8c9aa4"/>
 <path d="M0 7.5 L8 0 V7.5 Z" fill="#9aa6ae"/>
 <rect x="4" y="12" width="12" height="2" fill="#3c3f41"/>
 <rect x="4" y="16" width="12" height="2" fill="#3c3f41"/>
 <rect x="4" y="20" width="8" height="2" fill="#3c3f41"/></svg>
<div class="tr" style="left:180px;top:1854px;color:#bbbbbb;">OWNERS</div>
<svg style="left:73px;top:1904px;" width="17" height="17" viewBox="0 0 17 17"><path d="M0 0 L17 8.5 L0 17 Z" fill="#a8a8a8"/></svg>
<svg style="left:108px;top:1900px;" width="28" height="22" viewBox="0 0 28 22"><path d="M0 0 H10 L13 3.5 H28 V22 H0 Z" fill="#8c9aa4"/></svg>
<div class="tr" style="left:144px;top:1892px;color:#bbbbbb;">docs</div>
<svg style="left:73px;top:1942px;" width="17" height="17" viewBox="0 0 17 17"><path d="M0 0 L17 8.5 L0 17 Z" fill="#a8a8a8"/></svg>
<svg style="left:108px;top:1938px;" width="28" height="22" viewBox="0 0 28 22"><path d="M0 0 H10 L13 3.5 H28 V22 H0 Z" fill="#8c9aa4"/></svg>
<div class="tr" style="left:144px;top:1930px;color:#bbbbbb;">Godeps</div>
<svg style="left:73px;top:1980px;" width="17" height="17" viewBox="0 0 17 17"><path d="M0 0 L17 8.5 L0 17 Z" fill="#a8a8a8"/></svg>
<svg style="left:108px;top:1976px;" width="28" height="22" viewBox="0 0 28 22"><path d="M0 0 H10 L13 3.5 H28 V22 H0 Z" fill="#8c9aa4"/></svg>
<div class="tr" style="left:144px;top:1968px;color:#bbbbbb;">hack</div>
<svg style="left:73px;top:2018px;" width="17" height="17" viewBox="0 0 17 17"><path d="M0 0 L17 8.5 L0 17 Z" fill="#a8a8a8"/></svg>
<svg style="left:108px;top:2014px;" width="28" height="22" viewBox="0 0 28 22"><path d="M0 0 H10 L13 3.5 H28 V22 H0 Z" fill="#8c9aa4"/></svg>
<div class="tr" style="left:144px;top:2006px;color:#bbbbbb;">logo</div>
<svg style="left:73px;top:2056px;" width="17" height="17" viewBox="0 0 17 17"><path d="M0 0 L17 8.5 L0 17 Z" fill="#a8a8a8"/></svg>
<svg style="left:108px;top:2052px;" width="28" height="22" viewBox="0 0 28 22"><path d="M0 0 H10 L13 3.5 H28 V22 H0 Z" fill="#8c9aa4"/></svg>
<div class="tr" style="left:144px;top:2044px;color:#bbbbbb;">pkg</div>
<svg style="left:73px;top:2094px;" width="17" height="17" viewBox="0 0 17 17"><path d="M0 0 L17 8.5 L0 17 Z" fill="#a8a8a8"/></svg>
<svg style="left:108px;top:2090px;" width="28" height="22" viewBox="0 0 28 22"><path d="M0 0 H10 L13 3.5 H28 V22 H0 Z" fill="#8c9aa4"/></svg>
<div class="tr" style="left:144px;top:2082px;color:#bbbbbb;">plugin</div>
<svg style="left:73px;top:2132px;" width="17" height="17" viewBox="0 0 17 17"><path d="M0 0 L17 8.5 L0 17 Z" fill="#a8a8a8"/></svg>
<svg style="left:108px;top:2128px;" width="28" height="22" viewBox="0 0 28 22"><path d="M0 0 H10 L13 3.5 H28 V22 H0 Z" fill="#8c9aa4"/></svg>
<div class="tr" style="left:144px;top:2120px;color:#bbbbbb;">staging</div>
<svg style="left:73px;top:2170px;" width="17" height="17" viewBox="0 0 17 17"><path d="M0 0 L17 8.5 L0 17 Z" fill="#a8a8a8"/></svg>
<svg style="left:108px;top:2166px;" width="28" height="22" viewBox="0 0 28 22"><path d="M0 0 H10 L13 3.5 H28 V22 H0 Z" fill="#8c9aa4"/></svg>
<div class="tr" style="left:144px;top:2158px;color:#bbbbbb;">test</div>
<svg style="left:73px;top:2208px;" width="17" height="17" viewBox="0 0 17 17"><path d="M0 0 L17 8.5 L0 17 Z" fill="#a8a8a8"/></svg>
<svg style="left:108px;top:2204px;" width="28" height="22" viewBox="0 0 28 22"><path d="M0 0 H10 L13 3.5 H28 V22 H0 Z" fill="#8c9aa4"/></svg>
<div class="tr" style="left:144px;top:2196px;color:#bbbbbb;">third_party</div>
<svg style="left:73px;top:2246px;" width="17" height="17" viewBox="0 0 17 17"><path d="M0 0 L17 8.5 L0 17 Z" fill="#a8a8a8"/></svg>
<svg style="left:108px;top:2242px;" width="28" height="22" viewBox="0 0 28 22"><path d="M0 0 H10 L13 3.5 H28 V22 H0 Z" fill="#8c9aa4"/></svg>
<div class="tr" style="left:144px;top:2234px;color:#bbbbbb;">translations</div>
<div class="a" style="left:30px;top:2272px;width:584px;height:38px;background:#4b473b;"></div>
<svg style="left:73px;top:2284px;" width="17" height="17" viewBox="0 0 17 17"><path d="M0 0 L17 8.5 L0 17 Z" fill="#a8a8a8"/></svg>
<svg style="left:108px;top:2280px;" width="28" height="22" viewBox="0 0 28 22"><path d="M0 0 H10 L13 3.5 H28 V22 H0 Z" fill="#8c9aa4"/></svg>
<svg style="left:120px;top:2292px" width="16" height="16" viewBox="0 0 16 16"><path d="M0 0 L8 15 L16 0" stroke="#3d9fd8" stroke-width="4" fill="none"/></svg>
<div class="tr" style="left:144px;top:2272px;color:#bbbbbb;">vendor</div>
<svg style="left:112px;top:2315px;" width="20" height="28" viewBox="0 0 20 28"><path d="M9.5 0 H20 V28 H0 V10 H9.5 Z" fill="#8c9aa4"/>
 <path d="M0 7.5 L8 0 V7.5 Z" fill="#9aa6ae"/>
 <rect x="4" y="12" width="12" height="2" fill="#3c3f41"/>
 <rect x="4" y="16" width="12" height="2" fill="#3c3f41"/>
 <rect x="4" y="20" width="8" height="2" fill="#3c3f41"/></svg>
<svg style="left:123px;top:2313px" width="16" height="16" viewBox="0 0 16 16"><rect x="0" y="0" width="16" height="16" fill="#3c3f41"/><rect x="1.5" y="1.5" width="14" height="14" fill="#9aa6ae"/><path d="M4 12.5 L12.5 4 M7 3.5 H12.5 V9" stroke="#2f3133" stroke-width="2" fill="none"/></svg>
<div class="tr" style="left:144px;top:2310px;color:#bbbbbb;">.bazelrc</div>
<svg style="left:112px;top:2353px;" width="20" height="28" viewBox="0 0 20 28"><path d="M9.5 0 H20 V28 H0 V10 H9.5 Z" fill="#8c9aa4"/>
 <path d="M0 7.5 L8 0 V7.5 Z" fill="#9aa6ae"/>
 <rect x="4" y="12" width="12" height="2" fill="#3c3f41"/>
 <rect x="4" y="16" width="12" height="2" fill="#3c3f41"/>
 <rect x="4" y="20" width="8" height="2" fill="#3c3f41"/></svg>
<div class="tr" style="left:144px;top:2348px;color:#bbbbbb;">.generated_files</div>
<svg style="left:112px;top:2391px;" width="20" height="28" viewBox="0 0 20 28"><path d="M9.5 0 H20 V28 H0 V10 H9.5 Z" fill="#8c9aa4"/>
 <path d="M0 7.5 L8 0 V7.5 Z" fill="#9aa6ae"/>
 <rect x="4" y="12" width="12" height="2" fill="#3c3f41"/>
 <rect x="4" y="16" width="12" height="2" fill="#3c3f41"/>
 <rect x="4" y="20" width="8" height="2" fill="#3c3f41"/></svg>
<div class="tr" style="left:144px;top:2386px;color:#bbbbbb;">.gitattributes</div>
<svg style="left:112px;top:2429px;" width="20" height="28" viewBox="0 0 20 28"><path d="M9.5 0 H20 V28 H0 V10 H9.5 Z" fill="#8c9aa4"/>
 <path d="M0 7.5 L8 0 V7.5 Z" fill="#9aa6ae"/>
 <rect x="4" y="12" width="12" height="2" fill="#3c3f41"/>
 <rect x="4" y="16" width="12" height="2" fill="#3c3f41"/>
 <rect x="4" y="20" width="8" height="2" fill="#3c3f41"/></svg>
<div class="tr" style="left:144px;top:2424px;color:#bbbbbb;">.gitignore</div>
<svg style="left:112px;top:2467px;" width="20" height="28" viewBox="0 0 20 28"><path d="M9.5 0 H20 V28 H0 V10 H9.5 Z" fill="#8c9aa4"/>
 <path d="M0 7.5 L8 0 V7.5 Z" fill="#9aa6ae"/>
 <rect x="4" y="12" width="12" height="2" fill="#3c3f41"/>
 <rect x="4" y="16" width="12" height="2" fill="#3c3f41"/>
 <rect x="4" y="20" width="8" height="2" fill="#3c3f41"/></svg>
<svg style="left:114px;top:2481px" width="24" height="18" viewBox="0 0 24 18"><rect x="0" y="0" width="24" height="18" fill="#3c3f41"/><text x="12" y="15.5" font-size="19" font-weight="bold" text-anchor="middle" fill="#8c9aa4" font-family="Liberation Sans">{}</text></svg>
<svg style="left:123px;top:2465px" width="16" height="16" viewBox="0 0 16 16"><rect x="0" y="0" width="16" height="16" fill="#3c3f41"/><rect x="1.5" y="1.5" width="14" height="14" fill="#9aa6ae"/><path d="M4 12.5 L12.5 4 M7 3.5 H12.5 V9" stroke="#2f3133" stroke-width="2" fill="none"/></svg>
<div class="tr" style="left:144px;top:2462px;color:#bbbbbb;">.kazelcfg.json</div>
<svg style="left:112px;top:2505px;" width="20" height="28" viewBox="0 0 20 28"><path d="M9.5 0 H20 V28 H0 V10 H9.5 Z" fill="#8c9aa4"/>
 <path d="M0 7.5 L8 0 V7.5 Z" fill="#9aa6ae"/>
 <rect x="4" y="12" width="12" height="2" fill="#3c3f41"/>
 <rect x="4" y="16" width="12" height="2" fill="#3c3f41"/>
 <rect x="4" y="20" width="8" height="2" fill="#3c3f41"/></svg>
<svg style="left:123px;top:2503px" width="16" height="16" viewBox="0 0 16 16"><rect x="0" y="0" width="16" height="16" fill="#3c3f41"/><rect x="1.5" y="1.5" width="14" height="14" fill="#9aa6ae"/><path d="M4 12.5 L12.5 4 M7 3.5 H12.5 V9" stroke="#2f3133" stroke-width="2" fill="none"/></svg>
<div class="tr" style="left:144px;top:2500px;color:#bbbbbb;">BUILD.bazel</div>
<svg style="left:108px;top:2544px" width="30" height="30" viewBox="0 0 30 30"><path d="M13.5 0 H24 V14 H4 V9 H13.5 Z" fill="#8c9aa4"/><path d="M4 8 L12 0 V8 Z" fill="#9aa6ae"/><rect x="0" y="16" width="30" height="14" fill="#3a9cc8"/><text x="2" y="28" font-size="13.5" font-weight="bold" fill="#1a3a4c" font-family="Liberation Sans">MD</text></svg>
<div class="tr" style="left:144px;top:2538px;color:#bbbbbb;">CHANGELOG.md</div>
<svg style="left:108px;top:2582px" width="30" height="30" viewBox="0 0 30 30"><path d="M13.5 0 H24 V14 H4 V9 H13.5 Z" fill="#8c9aa4"/><path d="M4 8 L12 0 V8 Z" fill="#9aa6ae"/><rect x="0" y="16" width="30" height="14" fill="#3a9cc8"/><text x="2" y="28" font-size="13.5" font-weight="bold" fill="#1a3a4c" font-family="Liberation Sans">MD</text></svg>
<div class="tr" style="left:144px;top:2576px;color:#bbbbbb;">CHANGELOG-1.14.md</div>
<svg style="left:108px;top:2620px" width="30" height="30" viewBox="0 0 30 30"><path d="M13.5 0 H24 V14 H4 V9 H13.5 Z" fill="#8c9aa4"/><path d="M4 8 L12 0 V8 Z" fill="#9aa6ae"/><rect x="0" y="16" width="30" height="14" fill="#3a9cc8"/><text x="2" y="28" font-size="13.5" font-weight="bold" fill="#1a3a4c" font-family="Liberation Sans">MD</text></svg>
<div class="tr" style="left:144px;top:2614px;color:#bbbbbb;">code-of-conduct.md</div>
<svg style="left:108px;top:2658px" width="30" height="30" viewBox="0 0 30 30"><path d="M13.5 0 H24 V14 H4 V9 H13.5 Z" fill="#8c9aa4"/><path d="M4 8 L12 0 V8 Z" fill="#9aa6ae"/><rect x="0" y="16" width="30" height="14" fill="#3a9cc8"/><text x="2" y="28" font-size="13.5" font-weight="bold" fill="#1a3a4c" font-family="Liberation Sans">MD</text></svg>
<div class="tr" style="left:144px;top:2652px;color:#bbbbbb;">CONTRIBUTING.md</div>
<svg style="left:112px;top:2695px;" width="20" height="28" viewBox="0 0 20 28"><path d="M9.5 0 H20 V28 H0 V10 H9.5 Z" fill="#8c9aa4"/>
 <path d="M0 7.5 L8 0 V7.5 Z" fill="#9aa6ae"/>
 <rect x="4" y="12" width="12" height="2" fill="#3c3f41"/>
 <rect x="4" y="16" width="12" height="2" fill="#3c3f41"/>
 <rect x="4" y="20" width="8" height="2" fill="#3c3f41"/></svg>
<div class="tr" style="left:144px;top:2690px;color:#bbbbbb;">LICENSE</div>
<svg style="left:112px;top:2733px;" width="20" height="28" viewBox="0 0 20 28"><path d="M9.5 0 H20 V28 H0 V10 H9.5 Z" fill="#8c9aa4"/>
 <path d="M0 7.5 L8 0 V7.5 Z" fill="#9aa6ae"/>
 <rect x="4" y="12" width="12" height="2" fill="#3c3f41"/>
 <rect x="4" y="16" width="12" height="2" fill="#3c3f41"/>
 <rect x="4" y="20" width="8" height="2" fill="#3c3f41"/></svg>
<svg style="left:123px;top:2731px" width="16" height="16" viewBox="0 0 16 16"><rect x="0" y="0" width="16" height="16" fill="#3c3f41"/><rect x="1.5" y="1.5" width="14" height="14" fill="#9aa6ae"/><path d="M4 12.5 L12.5 4 M7 3.5 H12.5 V9" stroke="#2f3133" stroke-width="2" fill="none"/></svg>
<div class="tr" style="left:144px;top:2728px;color:#bbbbbb;">Makefile</div>
<svg style="left:112px;top:2771px;" width="20" height="28" viewBox="0 0 20 28"><path d="M9.5 0 H20 V28 H0 V10 H9.5 Z" fill="#8c9aa4"/>
 <path d="M0 7.5 L8 0 V7.5 Z" fill="#9aa6ae"/>
 <rect x="4" y="12" width="12" height="2" fill="#3c3f41"/>
 <rect x="4" y="16" width="12" height="2" fill="#3c3f41"/>
 <rect x="4" y="20" width="8" height="2" fill="#3c3f41"/></svg>
<svg style="left:123px;top:2769px" width="16" height="16" viewBox="0 0 16 16"><rect x="0" y="0" width="16" height="16" fill="#3c3f41"/><rect x="1.5" y="1.5" width="14" height="14" fill="#9aa6ae"/><path d="M4 12.5 L12.5 4 M7 3.5 H12.5 V9" stroke="#2f3133" stroke-width="2" fill="none"/></svg>
<div class="tr" style="left:144px;top:2766px;color:#bbbbbb;">Makefile.generated_files</div>
<svg style="left:112px;top:2809px;" width="20" height="28" viewBox="0 0 20 28"><path d="M9.5 0 H20 V28 H0 V10 H9.5 Z" fill="#8c9aa4"/>
 <path d="M0 7.5 L8 0 V7.5 Z" fill="#9aa6ae"/>
 <rect x="4" y="12" width="12" height="2" fill="#3c3f41"/>
 <rect x="4" y="16" width="12" height="2" fill="#3c3f41"/>
 <rect x="4" y="20" width="8" height="2" fill="#3c3f41"/></svg>
<div class="tr" style="left:144px;top:2804px;color:#bbbbbb;">OWNERS</div>
<svg style="left:112px;top:2847px;" width="20" height="28" viewBox="0 0 20 28"><path d="M9.5 0 H20 V28 H0 V10 H9.5 Z" fill="#8c9aa4"/>
 <path d="M0 7.5 L8 0 V7.5 Z" fill="#9aa6ae"/>
 <rect x="4" y="12" width="12" height="2" fill="#3c3f41"/>
 <rect x="4" y="16" width="12" height="2" fill="#3c3f41"/>
 <rect x="4" y="20" width="8" height="2" fill="#3c3f41"/></svg>
<div class="tr" style="left:144px;top:2842px;color:#bbbbbb;">OWNERS_ALIASES</div>
<svg style="left:108px;top:2886px" width="30" height="30" viewBox="0 0 30 30"><path d="M13.5 0 H24 V14 H4 V9 H13.5 Z" fill="#8c9aa4"/><path d="M4 8 L12 0 V8 Z" fill="#9aa6ae"/><rect x="0" y="16" width="30" height="14" fill="#3a9cc8"/><text x="2" y="28" font-size="13.5" font-weight="bold" fill="#1a3a4c" font-family="Liberation Sans">MD</text></svg>
<div class="tr" style="left:144px;top:2880px;color:#bbbbbb;">README.md</div>
</body></html>
